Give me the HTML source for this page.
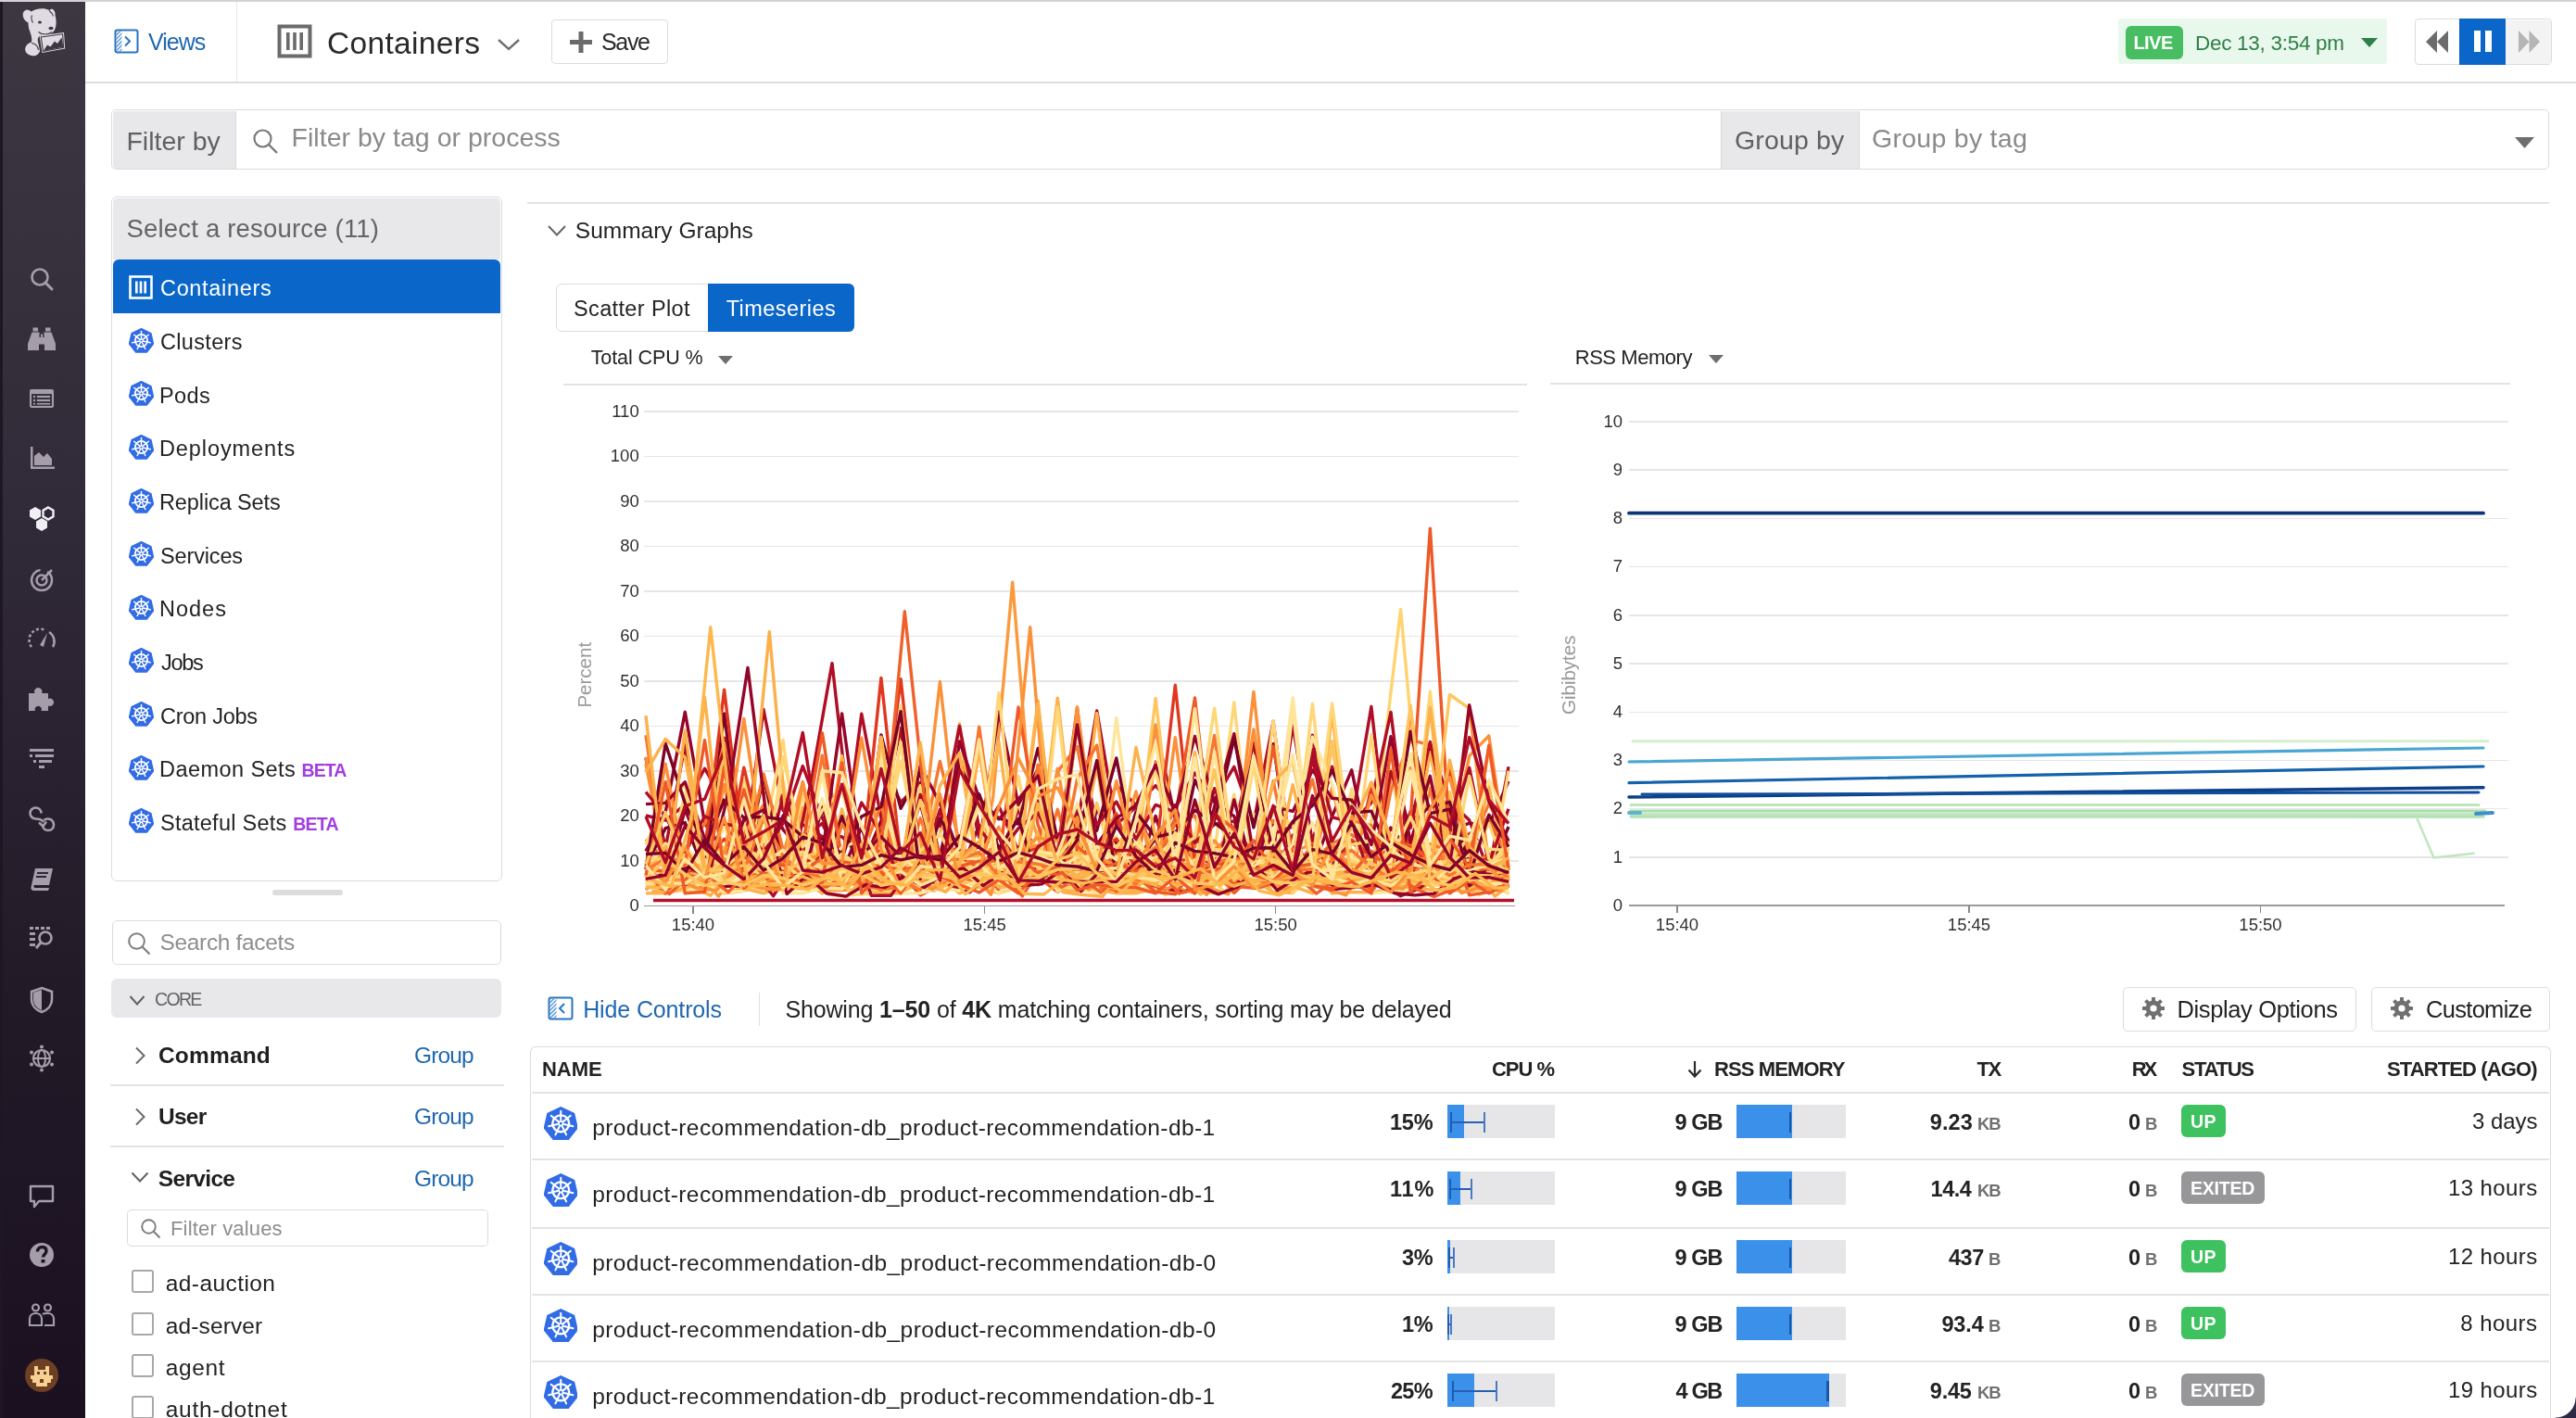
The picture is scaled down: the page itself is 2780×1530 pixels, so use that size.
<!DOCTYPE html>
<html><head><meta charset="utf-8"><title>Containers</title>
<style>
html,body{margin:0;padding:0;overflow:hidden;}
body{width:2780px;height:1530px;overflow:hidden;position:relative;background:#fff;font-family:"Liberation Sans", sans-serif;}
#root{position:absolute;left:0;top:0;width:2780px;height:1530px;overflow:hidden;will-change:transform;}
.t{position:absolute;white-space:nowrap;}
b{font-weight:bold;}
</style></head><body>
<div id="root"><div style="position:absolute;left:0.0px;top:0.0px;width:2780.0px;height:2.0px;background:#d3d3d5;"></div><div style="position:absolute;left:0.0px;top:2.0px;width:92.0px;height:1528.0px;background:linear-gradient(180deg,#3d3742 0%,#312a38 35%,#231a28 70%,#1a1020 100%);"></div><div style="position:absolute;left:0.0px;top:2.0px;width:3.0px;height:1528.0px;background:#1f1624;"></div><svg style="position:absolute;left:0;top:0" width="92" height="80" viewBox="0 0 92 80">
<g fill="#e0dbe3">
<path d="M33 13 C38 9 48 8 53 11 L56 9.5 C58.5 10.5 60 13.5 59.5 16.5 C61 21 61 27 59.5 31 C58 35 54 38 48 38.5 L43 38.5 C41 40 40 43 41.5 47 L43 55 C42 59 38 61 34 60 C29 59 26 55 27.5 51 C28.5 48 31 46.5 34 45.5 C35 42 33.5 37 31.5 32 C30 26 30 19 33 13 Z"/>
<ellipse cx="30.5" cy="17.5" rx="5.5" ry="7.2" transform="rotate(-25 30.5 17.5)"/>
<path d="M42.5 38.5 L69 35 L70.2 52.5 L45.5 57 Z"/>
</g>
<g fill="none" stroke="#3d3742" stroke-width="1.1">
<path d="M35.5 24.5 C34 22 33.5 19 34.5 16.5"/>
<path d="M53 11.5 C55 13 57 15 57.5 17.5"/>
<path d="M41.5 34.5 C45 37.5 52 38 56 34.5"/>
<path d="M34 46.5 C38 47 41 50 41.5 54"/>
<path d="M44.2 40 L67.6 36.8 L68.6 51.2 L46.6 55.3 Z"/>
</g>
<g fill="#3d3742">
<ellipse cx="43" cy="24" rx="2" ry="1.6"/>
<ellipse cx="55" cy="30.5" rx="2.6" ry="1.7"/>
<path d="M47 54.8 L51 48.5 L54.5 50.5 L59 44.5 L62 47 L66.5 40.5 L68.4 50.8 Z"/>
</g>
</svg><svg style="position:absolute;left:29.0px;top:284.5px" width="32" height="32" viewBox="0 0 32 32"><circle cx="14" cy="14" r="8.5" fill="none" stroke="#a59daa" stroke-width="2.6"/><path d="M20 20 L27 27" stroke="#a59daa" stroke-width="3" stroke-linecap="round"/></svg><svg style="position:absolute;left:29.0px;top:349.5px" width="32" height="32" viewBox="0 0 32 32"><path d="M6.5 3.5h5.5v4h-5.5zM20 3.5h5.5v4H20zM5.5 8.5h8v5.5h1.5v-3.5h2v3.5h1.5V8.5h8l4.5 12.5v7H19v-6.5h-6V28H1v-7z" fill="#a59daa"/></svg><svg style="position:absolute;left:29.0px;top:413.5px" width="32" height="32" viewBox="0 0 32 32"><rect x="3" y="6" width="26" height="20" rx="2" fill="#a59daa"/><rect x="5" y="11" width="22" height="13" fill="#3a3340"/><g fill="#a59daa"><rect x="7" y="13" width="2" height="2"/><rect x="11" y="13" width="14" height="2"/><rect x="7" y="17" width="2" height="2"/><rect x="11" y="17" width="14" height="2"/><rect x="7" y="21" width="2" height="1.5"/><rect x="11" y="21" width="14" height="1.5"/></g></svg><svg style="position:absolute;left:29.0px;top:478.4px" width="32" height="32" viewBox="0 0 32 32"><path d="M4 4v24h26v-2.5H6.5V4z" fill="#a59daa"/><path d="M8 24V14l5-4 5 5 4-4 5 6v7z" fill="#a59daa"/></svg><svg style="position:absolute;left:29.0px;top:544.3px" width="32" height="32" viewBox="0 0 32 32"><path d="M9 3l6 3.5v7L9 17l-6-3.5v-7z" fill="#f2eef5"/><path d="M23 3.5l5.5 3.2v6.6L23 16.5l-5.5-3.2V6.7z" fill="none" stroke="#f2eef5" stroke-width="2.4"/><path d="M16 15l6 3.5v7L16 29l-6-3.5v-7z" fill="#f2eef5"/></svg><svg style="position:absolute;left:29.0px;top:609.3px" width="32" height="32" viewBox="0 0 32 32"><circle cx="16" cy="17" r="11" fill="none" stroke="#a59daa" stroke-width="2.5" stroke-dasharray="50 8"/><circle cx="16" cy="17" r="5.5" fill="none" stroke="#a59daa" stroke-width="2.5"/><path d="M16 17 L27 6" stroke="#a59daa" stroke-width="2.5"/></svg><svg style="position:absolute;left:29.0px;top:674.2px" width="32" height="32" viewBox="0 0 32 32"><path d="M5 24 A12 12 0 0 1 20 6" fill="none" stroke="#a59daa" stroke-width="2.6" stroke-dasharray="3 2.5"/><path d="M24 8 A12 12 0 0 1 28 24" fill="none" stroke="#a59daa" stroke-width="2.6"/><path d="M14 22 L22 9 L18 24 Z" fill="#a59daa"/></svg><svg style="position:absolute;left:29.0px;top:738.0px" width="32" height="32" viewBox="0 0 32 32"><path d="M2 10 H8.5 A4.2 4.2 0 1 1 16 10 H23 V16 A4.2 4.2 0 1 1 23 23.5 V29 H15.5 A3.6 3.6 0 1 0 9 29 H2 Z" fill="#a59daa"/></svg><svg style="position:absolute;left:29.0px;top:803.0px" width="32" height="32" viewBox="0 0 32 32"><g fill="#a59daa"><rect x="3" y="5" width="26" height="3"/><rect x="3" y="11" width="3" height="3"/><rect x="9" y="11" width="20" height="3"/><rect x="7" y="17" width="3" height="3"/><rect x="13" y="17" width="14" height="3"/><rect x="13" y="23" width="6" height="3"/></g></svg><svg style="position:absolute;left:29.0px;top:868.0px" width="32" height="32" viewBox="0 0 32 32"><path d="M15.5 9.5 C15.5 5.8 12.8 3.5 9.5 3.5 C6.2 3.5 3.5 6.2 3.5 9.5 C3.5 12.8 6.2 15.5 9.5 15.5 C13.5 15.5 16.5 16.5 18 19 M18.5 16.8 C19.8 16 21.3 15.5 23 15.5 C26.5 15.5 29 18.5 29 22 C29 25.5 26.5 28 23 28 C19.5 28 17 25.5 17 22" fill="none" stroke="#a59daa" stroke-width="2.6"/><path d="M13 19.5 L17.5 23.5 L21 18.5" fill="none" stroke="#a59daa" stroke-width="2.6"/></svg><svg style="position:absolute;left:29.0px;top:933.0px" width="32" height="32" viewBox="0 0 32 32"><path d="M9 4h19l-4 18H5z" fill="#a59daa"/><path d="M5 22 Q3 28 8 28 H23 L24 25 H9 Q7 25 7.5 22z" fill="#a59daa"/><rect x="11" y="8" width="12" height="2" fill="#2e2636"/><rect x="10" y="12" width="11" height="2" fill="#2e2636"/></svg><svg style="position:absolute;left:29.0px;top:996.0px" width="32" height="32" viewBox="0 0 32 32"><g fill="#a59daa"><rect x="3" y="4" width="4" height="3"/><rect x="9" y="4" width="4" height="3"/><rect x="15" y="4" width="4" height="3"/><rect x="21" y="4" width="4" height="3"/><rect x="3" y="10" width="6" height="3"/><rect x="3" y="16" width="6" height="3"/><rect x="3" y="22" width="6" height="3"/></g><circle cx="20" cy="16" r="6.5" fill="none" stroke="#a59daa" stroke-width="2.6"/><path d="M15 21 L10 27" stroke="#a59daa" stroke-width="3"/></svg><svg style="position:absolute;left:29.0px;top:1062.8px" width="32" height="32" viewBox="0 0 32 32"><path d="M16 3 L27 7 V15 C27 22 22 27 16 29 C10 27 5 22 5 15 V7 Z" fill="none" stroke="#a59daa" stroke-width="2.5"/><path d="M16 5 V27 C11 25 7 21 7 15 V8 Z" fill="#a59daa"/></svg><svg style="position:absolute;left:29.0px;top:1126.0px" width="32" height="32" viewBox="0 0 32 32"><circle cx="16" cy="16" r="9" fill="none" stroke="#a59daa" stroke-width="2.2"/><ellipse cx="16" cy="16" rx="4" ry="9" fill="none" stroke="#a59daa" stroke-width="2"/><path d="M7 16h18" stroke="#a59daa" stroke-width="2"/><g fill="#a59daa"><circle cx="16" cy="3.5" r="2"/><circle cx="16" cy="28.5" r="2"/><circle cx="5" cy="9.5" r="2"/><circle cx="27" cy="9.5" r="2"/><circle cx="5" cy="22.5" r="2"/><circle cx="27" cy="22.5" r="2"/></g></svg><svg style="position:absolute;left:29.0px;top:1274.5px" width="32" height="32" viewBox="0 0 32 32"><path d="M4 5 H28 V21 H13 L8 27 V21 H4 Z" fill="none" stroke="#a59daa" stroke-width="2.4" stroke-linejoin="round"/></svg><svg style="position:absolute;left:29.0px;top:1338.0px" width="32" height="32" viewBox="0 0 32 32"><circle cx="16" cy="16" r="13" fill="#a59daa"/><path d="M11.5 12.5 C11.5 9 14 7.5 16.5 7.5 C19.5 7.5 21 9.5 21 12 C21 15 17.5 15.5 17.5 18.5" fill="none" stroke="#1e1424" stroke-width="3.4"/><rect x="15.5" y="21" width="4" height="3.5" fill="#1e1424"/></svg><svg style="position:absolute;left:29.0px;top:1403.0px" width="32" height="32" viewBox="0 0 32 32"><circle cx="9.5" cy="8" r="3.5" fill="none" stroke="#a59daa" stroke-width="2.2"/><circle cx="22.5" cy="8" r="3.5" fill="none" stroke="#a59daa" stroke-width="2.2"/><path d="M3 27 V20 C3 16 6 14 9.5 14 C13 14 16 16 16 20 V27 Z" fill="none" stroke="#a59daa" stroke-width="2.2"/><path d="M17 15 C18 14 20 14 22.5 14 C26 14 29 16 29 20 V27 H19" fill="none" stroke="#a59daa" stroke-width="2.2"/></svg><svg style="position:absolute;left:27px;top:1466px" width="36" height="36" viewBox="0 0 36 36"><circle cx="18" cy="18" r="18" fill="#6e3f22"/>
<g fill="#f6cf93"><rect x="10" y="8" width="4" height="4"/><rect x="22" y="8" width="4" height="4"/><rect x="10" y="12" width="16" height="6"/><rect x="6" y="18" width="24" height="4"/><rect x="8" y="22" width="8" height="4"/><rect x="20" y="22" width="8" height="4"/><rect x="12" y="26" width="12" height="4"/></g>
<g fill="#6e3f22"><rect x="13" y="14" width="3" height="3"/><rect x="20" y="14" width="3" height="3"/><rect x="16" y="22" width="4" height="3"/></g></svg><div style="position:absolute;left:92.0px;top:88.0px;width:2688.0px;height:1.5px;background:#dedde0;"></div><div style="position:absolute;left:254.5px;top:2.0px;width:1.2px;height:86.0px;background:#e6e6e8;"></div><svg style="position:absolute;left:123px;top:31px" width="27" height="27" viewBox="0 0 27 27">
<defs><pattern id="hatch" width="3" height="3" patternUnits="userSpaceOnUse" patternTransform="rotate(45)"><rect width="1.2" height="3" fill="#3a83cc"/></pattern></defs>
<rect x="1.5" y="1.5" width="24" height="24" rx="2" fill="none" stroke="#2a75c0" stroke-width="2"/>
<rect x="2.5" y="2.5" width="6" height="22" fill="url(#hatch)"/>
<path d="M12 8.5 L17 13.5 L12 18.5" fill="none" stroke="#2a75c0" stroke-width="2"/></svg><div id="t1" class="t" style="left:160.0px;top:32.8px;font-size:25.0px;line-height:25.0px;color:#2068b0;font-weight:normal;letter-spacing:-1.000px;">Views</div><svg style="position:absolute;left:299px;top:26px" width="38" height="37" viewBox="0 0 38 37">
<rect x="2.5" y="2.5" width="33" height="32" fill="none" stroke="#6b6b6b" stroke-width="4"/>
<rect x="10" y="9" width="3.6" height="19" fill="#6b6b6b"/><rect x="17.2" y="9" width="3.6" height="19" fill="#6b6b6b"/><rect x="24.4" y="9" width="3.6" height="19" fill="#6b6b6b"/></svg><div id="t2" class="t" style="left:353.0px;top:29.5px;font-size:33.5px;line-height:33.5px;color:#2a2a2c;font-weight:normal;letter-spacing:0.333px;">Containers</div><svg style="position:absolute;left:536px;top:41px" width="26" height="14" viewBox="0 0 26 14"><path d="M2 2 L13 12 L24 2" fill="none" stroke="#707070" stroke-width="2.4"/></svg><div style="position:absolute;left:595.0px;top:21.0px;width:126.0px;height:48.0px;box-sizing:border-box;border:1.5px solid #dcdcde;border-radius:4px;background:#fff;"></div><svg style="position:absolute;left:615px;top:34px" width="24" height="23" viewBox="0 0 24 23"><rect x="9.5" y="0" width="5" height="23" fill="#6a6a6a"/><rect x="0" y="9" width="24" height="5" fill="#6a6a6a"/></svg><div id="t3" class="t" style="left:649.0px;top:32.8px;font-size:25.0px;line-height:25.0px;color:#2a2a2c;font-weight:normal;letter-spacing:-1.333px;">Save</div><div style="position:absolute;left:2286.0px;top:20.0px;width:290.0px;height:49.0px;background:#e9f8ec;border-radius:3px;"></div><div style="position:absolute;left:2294.0px;top:28.0px;width:62.0px;height:36.0px;background:#48bd61;border-radius:6px;"></div><div id="t4" class="t" style="left:2302.4px;top:36.0px;font-size:20.0px;line-height:20.0px;color:#ffffff;font-weight:bold;letter-spacing:-0.533px;">LIVE</div><div id="t5" class="t" style="left:2369.0px;top:35.9px;font-size:22.5px;line-height:22.5px;color:#2f7f47;font-weight:normal;letter-spacing:-0.286px;">Dec 13, 3:54 pm</div><svg style="position:absolute;left:2548px;top:41px" width="18" height="10" viewBox="0 0 18 10"><path d="M0 0 H18 L9 10 Z" fill="#2f8049"/></svg><div style="position:absolute;left:2606.0px;top:20.0px;width:148.0px;height:50.0px;box-sizing:border-box;border:1.5px solid #dcdcde;border-radius:4px;background:#fff;"></div><div style="position:absolute;left:2704.0px;top:21.5px;width:48.5px;height:47.0px;background:#f3f3f4;"></div><div style="position:absolute;left:2654.0px;top:20.0px;width:50.0px;height:50.0px;background:#0b66c9;"></div><svg style="position:absolute;left:2618px;top:33px" width="24" height="24" viewBox="0 0 24 24"><path d="M12 0 V24 L0 12 Z M24 0 V24 L12 12 Z" fill="#6c6c6c"/></svg><div style="position:absolute;left:2669.8px;top:33.3px;width:7.6px;height:22.8px;background:#fff;"></div><div style="position:absolute;left:2681.9px;top:33.3px;width:7.6px;height:22.8px;background:#fff;"></div><svg style="position:absolute;left:2718px;top:33px" width="23" height="24" viewBox="0 0 23 24"><path d="M0 0 L11.5 12 L0 24 Z M11.5 0 L23 12 L11.5 24 Z" fill="#b5b5b8"/></svg><div style="position:absolute;left:120.0px;top:118.0px;width:2630.6px;height:65.0px;box-sizing:border-box;border:1.5px solid #dcdcdf;border-radius:5px;background:#fff;"></div><div style="position:absolute;left:121.5px;top:119.5px;width:132.5px;height:62.0px;background:#e8e8eb;border-radius:4px 0 0 4px;border-right:1.2px solid #dadadd;"></div><div id="t6" class="t" style="left:136.4px;top:137.5px;font-size:28.5px;line-height:28.5px;color:#606062;font-weight:normal;letter-spacing:0.000px;">Filter by</div><svg style="position:absolute;left:272px;top:138px" width="29" height="29" viewBox="0 0 29 29"><circle cx="11.5" cy="11.5" r="9" fill="none" stroke="#7a7a7a" stroke-width="2.2"/><path d="M18 18 L27 27" stroke="#7a7a7a" stroke-width="2.4"/></svg><div id="t7" class="t" style="left:314.6px;top:133.8px;font-size:28.5px;line-height:28.5px;color:#8a8a8c;font-weight:normal;letter-spacing:0.017px;">Filter by tag or process</div><div style="position:absolute;left:1856.5px;top:119.5px;width:148.5px;height:62.0px;background:#e8e8eb;border-left:1.2px solid #dadadd;border-right:1.2px solid #dadadd;"></div><div id="t8" class="t" style="left:1872.0px;top:137.3px;font-size:28.5px;line-height:28.5px;color:#606062;font-weight:normal;letter-spacing:0.143px;">Group by</div><div id="t9" class="t" style="left:2020.0px;top:135.4px;font-size:28.5px;line-height:28.5px;color:#8a8a8c;font-weight:normal;letter-spacing:0.273px;">Group by tag</div><svg style="position:absolute;left:2714px;top:148px" width="21" height="12" viewBox="0 0 21 12"><path d="M0 0 H21 L10.5 12 Z" fill="#6e6e6e"/></svg><div style="position:absolute;left:120.0px;top:212.4px;width:421.5px;height:738.2px;box-sizing:border-box;border:1.5px solid #dcdcdf;border-radius:6px;background:#fff;"></div><div style="position:absolute;left:121.5px;top:213.9px;width:418.5px;height:66.1px;background:#e8e8eb;border-radius:5px 5px 0 0;"></div><div id="t10" class="t" style="left:136.5px;top:232.6px;font-size:27.5px;line-height:27.5px;color:#646466;font-weight:normal;letter-spacing:0.190px;">Select a resource (11)</div><div style="position:absolute;left:122.4px;top:280.0px;width:417.6px;height:57.7px;background:#0b66c9;border-radius:6px 6px 0 0;"></div><svg style="position:absolute;left:139px;top:297px" width="26" height="26" viewBox="0 0 26 26">
<rect x="1.5" y="1.5" width="23" height="23" fill="none" stroke="#fff" stroke-width="2.6"/>
<rect x="7" y="6.5" width="2.6" height="13" fill="#fff"/><rect x="11.7" y="6.5" width="2.6" height="13" fill="#fff"/><rect x="16.4" y="6.5" width="2.6" height="13" fill="#fff"/></svg><div id="t11" class="t" style="left:173.0px;top:300.0px;font-size:23.5px;line-height:23.5px;color:#ffffff;font-weight:normal;letter-spacing:0.667px;">Containers</div><svg style="position:absolute;left:138.5px;top:353.5px" width="27.0" height="27.0" viewBox="0 0 27.0 27.0"><polygon points="13.50,0.95 23.74,5.88 26.27,16.95 19.18,25.84 7.82,25.84 0.73,16.95 3.26,5.88" fill="#326ce5" stroke="#326ce5" stroke-width="1.89" stroke-linejoin="round"/><g stroke="#fff" fill="none"><circle cx="13.50" cy="13.50" r="6.62" stroke-width="1.76"/><path d="M13.50 11.61 L13.50 3.51 M14.98 12.32 L21.31 7.27 M15.34 13.92 L23.24 15.72 M14.32 15.20 L17.83 22.50 M12.68 15.20 L9.17 22.50 M11.66 13.92 L3.76 15.72 M12.02 12.32 L5.69 7.27 " stroke-width="1.49" stroke-linecap="round"/></g><circle cx="13.50" cy="13.50" r="1.62" fill="#326ce5" stroke="#fff" stroke-width="1.08"/></svg><div id="t12" class="t" style="left:173.0px;top:358.0px;font-size:23.5px;line-height:23.5px;color:#232325;font-weight:normal;letter-spacing:0.329px;">Clusters</div><svg style="position:absolute;left:138.5px;top:411.1px" width="27.0" height="27.0" viewBox="0 0 27.0 27.0"><polygon points="13.50,0.95 23.74,5.88 26.27,16.95 19.18,25.84 7.82,25.84 0.73,16.95 3.26,5.88" fill="#326ce5" stroke="#326ce5" stroke-width="1.89" stroke-linejoin="round"/><g stroke="#fff" fill="none"><circle cx="13.50" cy="13.50" r="6.62" stroke-width="1.76"/><path d="M13.50 11.61 L13.50 3.51 M14.98 12.32 L21.31 7.27 M15.34 13.92 L23.24 15.72 M14.32 15.20 L17.83 22.50 M12.68 15.20 L9.17 22.50 M11.66 13.92 L3.76 15.72 M12.02 12.32 L5.69 7.27 " stroke-width="1.49" stroke-linecap="round"/></g><circle cx="13.50" cy="13.50" r="1.62" fill="#326ce5" stroke="#fff" stroke-width="1.08"/></svg><div id="t13" class="t" style="left:172.0px;top:415.7px;font-size:23.5px;line-height:23.5px;color:#232325;font-weight:normal;letter-spacing:0.433px;">Pods</div><svg style="position:absolute;left:138.5px;top:468.8px" width="27.0" height="27.0" viewBox="0 0 27.0 27.0"><polygon points="13.50,0.95 23.74,5.88 26.27,16.95 19.18,25.84 7.82,25.84 0.73,16.95 3.26,5.88" fill="#326ce5" stroke="#326ce5" stroke-width="1.89" stroke-linejoin="round"/><g stroke="#fff" fill="none"><circle cx="13.50" cy="13.50" r="6.62" stroke-width="1.76"/><path d="M13.50 11.61 L13.50 3.51 M14.98 12.32 L21.31 7.27 M15.34 13.92 L23.24 15.72 M14.32 15.20 L17.83 22.50 M12.68 15.20 L9.17 22.50 M11.66 13.92 L3.76 15.72 M12.02 12.32 L5.69 7.27 " stroke-width="1.49" stroke-linecap="round"/></g><circle cx="13.50" cy="13.50" r="1.62" fill="#326ce5" stroke="#fff" stroke-width="1.08"/></svg><div id="t14" class="t" style="left:172.0px;top:473.3px;font-size:23.5px;line-height:23.5px;color:#232325;font-weight:normal;letter-spacing:0.900px;">Deployments</div><svg style="position:absolute;left:138.5px;top:526.5px" width="27.0" height="27.0" viewBox="0 0 27.0 27.0"><polygon points="13.50,0.95 23.74,5.88 26.27,16.95 19.18,25.84 7.82,25.84 0.73,16.95 3.26,5.88" fill="#326ce5" stroke="#326ce5" stroke-width="1.89" stroke-linejoin="round"/><g stroke="#fff" fill="none"><circle cx="13.50" cy="13.50" r="6.62" stroke-width="1.76"/><path d="M13.50 11.61 L13.50 3.51 M14.98 12.32 L21.31 7.27 M15.34 13.92 L23.24 15.72 M14.32 15.20 L17.83 22.50 M12.68 15.20 L9.17 22.50 M11.66 13.92 L3.76 15.72 M12.02 12.32 L5.69 7.27 " stroke-width="1.49" stroke-linecap="round"/></g><circle cx="13.50" cy="13.50" r="1.62" fill="#326ce5" stroke="#fff" stroke-width="1.08"/></svg><div id="t15" class="t" style="left:172.0px;top:531.0px;font-size:23.5px;line-height:23.5px;color:#232325;font-weight:normal;letter-spacing:-0.109px;">Replica Sets</div><svg style="position:absolute;left:138.5px;top:584.1px" width="27.0" height="27.0" viewBox="0 0 27.0 27.0"><polygon points="13.50,0.95 23.74,5.88 26.27,16.95 19.18,25.84 7.82,25.84 0.73,16.95 3.26,5.88" fill="#326ce5" stroke="#326ce5" stroke-width="1.89" stroke-linejoin="round"/><g stroke="#fff" fill="none"><circle cx="13.50" cy="13.50" r="6.62" stroke-width="1.76"/><path d="M13.50 11.61 L13.50 3.51 M14.98 12.32 L21.31 7.27 M15.34 13.92 L23.24 15.72 M14.32 15.20 L17.83 22.50 M12.68 15.20 L9.17 22.50 M11.66 13.92 L3.76 15.72 M12.02 12.32 L5.69 7.27 " stroke-width="1.49" stroke-linecap="round"/></g><circle cx="13.50" cy="13.50" r="1.62" fill="#326ce5" stroke="#fff" stroke-width="1.08"/></svg><div id="t16" class="t" style="left:173.0px;top:588.6px;font-size:23.5px;line-height:23.5px;color:#232325;font-weight:normal;letter-spacing:-0.143px;">Services</div><svg style="position:absolute;left:138.5px;top:641.8px" width="27.0" height="27.0" viewBox="0 0 27.0 27.0"><polygon points="13.50,0.95 23.74,5.88 26.27,16.95 19.18,25.84 7.82,25.84 0.73,16.95 3.26,5.88" fill="#326ce5" stroke="#326ce5" stroke-width="1.89" stroke-linejoin="round"/><g stroke="#fff" fill="none"><circle cx="13.50" cy="13.50" r="6.62" stroke-width="1.76"/><path d="M13.50 11.61 L13.50 3.51 M14.98 12.32 L21.31 7.27 M15.34 13.92 L23.24 15.72 M14.32 15.20 L17.83 22.50 M12.68 15.20 L9.17 22.50 M11.66 13.92 L3.76 15.72 M12.02 12.32 L5.69 7.27 " stroke-width="1.49" stroke-linecap="round"/></g><circle cx="13.50" cy="13.50" r="1.62" fill="#326ce5" stroke="#fff" stroke-width="1.08"/></svg><div id="t17" class="t" style="left:172.0px;top:646.3px;font-size:23.5px;line-height:23.5px;color:#232325;font-weight:normal;letter-spacing:1.000px;">Nodes</div><svg style="position:absolute;left:138.5px;top:699.4px" width="27.0" height="27.0" viewBox="0 0 27.0 27.0"><polygon points="13.50,0.95 23.74,5.88 26.27,16.95 19.18,25.84 7.82,25.84 0.73,16.95 3.26,5.88" fill="#326ce5" stroke="#326ce5" stroke-width="1.89" stroke-linejoin="round"/><g stroke="#fff" fill="none"><circle cx="13.50" cy="13.50" r="6.62" stroke-width="1.76"/><path d="M13.50 11.61 L13.50 3.51 M14.98 12.32 L21.31 7.27 M15.34 13.92 L23.24 15.72 M14.32 15.20 L17.83 22.50 M12.68 15.20 L9.17 22.50 M11.66 13.92 L3.76 15.72 M12.02 12.32 L5.69 7.27 " stroke-width="1.49" stroke-linecap="round"/></g><circle cx="13.50" cy="13.50" r="1.62" fill="#326ce5" stroke="#fff" stroke-width="1.08"/></svg><div id="t18" class="t" style="left:174.0px;top:703.9px;font-size:23.5px;line-height:23.5px;color:#232325;font-weight:normal;letter-spacing:-1.333px;">Jobs</div><svg style="position:absolute;left:138.5px;top:757.0px" width="27.0" height="27.0" viewBox="0 0 27.0 27.0"><polygon points="13.50,0.95 23.74,5.88 26.27,16.95 19.18,25.84 7.82,25.84 0.73,16.95 3.26,5.88" fill="#326ce5" stroke="#326ce5" stroke-width="1.89" stroke-linejoin="round"/><g stroke="#fff" fill="none"><circle cx="13.50" cy="13.50" r="6.62" stroke-width="1.76"/><path d="M13.50 11.61 L13.50 3.51 M14.98 12.32 L21.31 7.27 M15.34 13.92 L23.24 15.72 M14.32 15.20 L17.83 22.50 M12.68 15.20 L9.17 22.50 M11.66 13.92 L3.76 15.72 M12.02 12.32 L5.69 7.27 " stroke-width="1.49" stroke-linecap="round"/></g><circle cx="13.50" cy="13.50" r="1.62" fill="#326ce5" stroke="#fff" stroke-width="1.08"/></svg><div id="t19" class="t" style="left:173.0px;top:761.6px;font-size:23.5px;line-height:23.5px;color:#232325;font-weight:normal;letter-spacing:-0.250px;">Cron Jobs</div><svg style="position:absolute;left:138.5px;top:814.7px" width="27.0" height="27.0" viewBox="0 0 27.0 27.0"><polygon points="13.50,0.95 23.74,5.88 26.27,16.95 19.18,25.84 7.82,25.84 0.73,16.95 3.26,5.88" fill="#326ce5" stroke="#326ce5" stroke-width="1.89" stroke-linejoin="round"/><g stroke="#fff" fill="none"><circle cx="13.50" cy="13.50" r="6.62" stroke-width="1.76"/><path d="M13.50 11.61 L13.50 3.51 M14.98 12.32 L21.31 7.27 M15.34 13.92 L23.24 15.72 M14.32 15.20 L17.83 22.50 M12.68 15.20 L9.17 22.50 M11.66 13.92 L3.76 15.72 M12.02 12.32 L5.69 7.27 " stroke-width="1.49" stroke-linecap="round"/></g><circle cx="13.50" cy="13.50" r="1.62" fill="#326ce5" stroke="#fff" stroke-width="1.08"/></svg><div id="t20" class="t" style="left:172.0px;top:819.2px;font-size:23.5px;line-height:23.5px;color:#232325;font-weight:normal;letter-spacing:0.440px;">Daemon Sets</div><svg style="position:absolute;left:138.5px;top:872.4px" width="27.0" height="27.0" viewBox="0 0 27.0 27.0"><polygon points="13.50,0.95 23.74,5.88 26.27,16.95 19.18,25.84 7.82,25.84 0.73,16.95 3.26,5.88" fill="#326ce5" stroke="#326ce5" stroke-width="1.89" stroke-linejoin="round"/><g stroke="#fff" fill="none"><circle cx="13.50" cy="13.50" r="6.62" stroke-width="1.76"/><path d="M13.50 11.61 L13.50 3.51 M14.98 12.32 L21.31 7.27 M15.34 13.92 L23.24 15.72 M14.32 15.20 L17.83 22.50 M12.68 15.20 L9.17 22.50 M11.66 13.92 L3.76 15.72 M12.02 12.32 L5.69 7.27 " stroke-width="1.49" stroke-linecap="round"/></g><circle cx="13.50" cy="13.50" r="1.62" fill="#326ce5" stroke="#fff" stroke-width="1.08"/></svg><div id="t21" class="t" style="left:173.0px;top:876.9px;font-size:23.5px;line-height:23.5px;color:#232325;font-weight:normal;letter-spacing:0.250px;">Stateful Sets</div><div id="t22" class="t" style="left:325.6px;top:822.4px;font-size:19.5px;line-height:19.5px;color:#a23ee0;font-weight:bold;letter-spacing:-0.933px;">BETA</div><div id="t23" class="t" style="left:316.3px;top:880.2px;font-size:19.5px;line-height:19.5px;color:#a23ee0;font-weight:bold;letter-spacing:-0.767px;">BETA</div><div style="position:absolute;left:294.0px;top:960.0px;width:76.0px;height:6.0px;background:#dcdcde;border-radius:3px;"></div><div style="position:absolute;left:120.6px;top:992.5px;width:420.4px;height:48.5px;box-sizing:border-box;border:1.5px solid #dcdcdf;border-radius:5px;background:#fff;"></div><svg style="position:absolute;left:137px;top:1005px" width="26" height="26" viewBox="0 0 26 26"><circle cx="10.5" cy="10.5" r="8.3" fill="none" stroke="#7c7c7c" stroke-width="2"/><path d="M16.5 16.5 L24.5 24.5" stroke="#7c7c7c" stroke-width="2.2"/></svg><div id="t24" class="t" style="left:172.5px;top:1004.9px;font-size:24.5px;line-height:24.5px;color:#8e8e90;font-weight:normal;letter-spacing:-0.333px;">Search facets</div><div style="position:absolute;left:120.0px;top:1056.0px;width:421.0px;height:41.6px;background:#e8e8eb;border-radius:6px;"></div><svg style="position:absolute;left:139px;top:1073px" width="18" height="13" viewBox="0 0 18 13"><path d="M1.5 2 L9 10.5 L16.5 2" fill="none" stroke="#616161" stroke-width="2"/></svg><div id="t25" class="t" style="left:167.0px;top:1069.4px;font-size:19.5px;line-height:19.5px;color:#636365;font-weight:normal;letter-spacing:-1.667px;">CORE</div><svg style="position:absolute;left:144.5px;top:1128.5px" width="13" height="20" viewBox="0 0 13 20"><path d="M2 1.5 L10.5 10 L2 18.5" fill="none" stroke="#6a6a6a" stroke-width="2"/></svg><div id="t26" class="t" style="left:171.0px;top:1126.9px;font-size:24.5px;line-height:24.5px;color:#1f1f21;font-weight:bold;letter-spacing:0.167px;">Command</div><div id="t27" class="t" style="left:447.0px;top:1127.4px;font-size:24.5px;line-height:24.5px;color:#2068b0;font-weight:normal;letter-spacing:-0.875px;">Group</div><div style="position:absolute;left:118.5px;top:1170.3px;width:425.0px;height:1.5px;background:#e3e3e5;"></div><svg style="position:absolute;left:144.5px;top:1194.5px" width="13" height="20" viewBox="0 0 13 20"><path d="M2 1.5 L10.5 10 L2 18.5" fill="none" stroke="#6a6a6a" stroke-width="2"/></svg><div id="t28" class="t" style="left:171.0px;top:1193.2px;font-size:24.5px;line-height:24.5px;color:#1f1f21;font-weight:bold;letter-spacing:-0.733px;">User</div><div id="t29" class="t" style="left:447.0px;top:1193.4px;font-size:24.5px;line-height:24.5px;color:#2068b0;font-weight:normal;letter-spacing:-0.875px;">Group</div><div style="position:absolute;left:118.5px;top:1236.3px;width:425.0px;height:1.5px;background:#e3e3e5;"></div><svg style="position:absolute;left:141px;top:1264px" width="20" height="13" viewBox="0 0 20 13"><path d="M1.5 1.5 L10 10.5 L18.5 1.5" fill="none" stroke="#616161" stroke-width="2"/></svg><div id="t30" class="t" style="left:170.8px;top:1259.6px;font-size:24.5px;line-height:24.5px;color:#1f1f21;font-weight:bold;letter-spacing:-0.667px;">Service</div><div id="t31" class="t" style="left:447.0px;top:1259.6px;font-size:24.5px;line-height:24.5px;color:#2068b0;font-weight:normal;letter-spacing:-0.875px;">Group</div><div style="position:absolute;left:137.0px;top:1304.5px;width:390.0px;height:40.8px;box-sizing:border-box;border:1.5px solid #dcdcdf;border-radius:5px;background:#fff;"></div><svg style="position:absolute;left:151px;top:1314px" width="23" height="23" viewBox="0 0 23 23"><circle cx="9.5" cy="9.5" r="7.3" fill="none" stroke="#7c7c7c" stroke-width="1.9"/><path d="M14.8 14.8 L21.5 21.5" stroke="#7c7c7c" stroke-width="2"/></svg><div id="t32" class="t" style="left:184.0px;top:1315.3px;font-size:22.0px;line-height:22.0px;color:#8e8e90;font-weight:normal;letter-spacing:0.167px;">Filter values</div><div style="position:absolute;left:141.7px;top:1370.0px;width:24.5px;height:25.0px;box-sizing:border-box;border:2px solid #a9a9ab;border-radius:3px;background:#fff;"></div><div id="t33" class="t" style="left:178.8px;top:1373.2px;font-size:24.5px;line-height:24.5px;color:#232325;font-weight:normal;letter-spacing:0.411px;">ad-auction</div><div style="position:absolute;left:141.7px;top:1416.0px;width:24.5px;height:25.0px;box-sizing:border-box;border:2px solid #a9a9ab;border-radius:3px;background:#fff;"></div><div id="t34" class="t" style="left:178.8px;top:1418.7px;font-size:24.5px;line-height:24.5px;color:#232325;font-weight:normal;letter-spacing:0.125px;">ad-server</div><div style="position:absolute;left:141.7px;top:1460.6px;width:24.5px;height:25.0px;box-sizing:border-box;border:2px solid #a9a9ab;border-radius:3px;background:#fff;"></div><div id="t35" class="t" style="left:178.8px;top:1463.7px;font-size:24.5px;line-height:24.5px;color:#232325;font-weight:normal;letter-spacing:0.600px;">agent</div><div style="position:absolute;left:141.7px;top:1506.0px;width:24.5px;height:25.0px;box-sizing:border-box;border:2px solid #a9a9ab;border-radius:3px;background:#fff;"></div><div id="t36" class="t" style="left:178.8px;top:1508.7px;font-size:24.5px;line-height:24.5px;color:#232325;font-weight:normal;letter-spacing:0.700px;">auth-dotnet</div><div style="position:absolute;left:568.5px;top:218.0px;width:2182.0px;height:1.5px;background:#e3e3e5;"></div><svg style="position:absolute;left:590px;top:242px" width="22" height="14" viewBox="0 0 22 14"><path d="M2 2 L11 11.5 L20 2" fill="none" stroke="#666" stroke-width="2"/></svg><div id="t37" class="t" style="left:620.8px;top:237.2px;font-size:24.5px;line-height:24.5px;color:#242426;font-weight:normal;letter-spacing:0.000px;">Summary Graphs</div><div style="position:absolute;left:600.0px;top:306.0px;width:322.0px;height:51.5px;box-sizing:border-box;border:1.5px solid #dcdcdf;border-radius:6px;background:#fff;"></div><div style="position:absolute;left:764.0px;top:306.0px;width:158.0px;height:51.5px;background:#0b66c9;border-radius:0 6px 6px 0;"></div><div id="t38" class="t" style="left:619.0px;top:321.8px;font-size:23.5px;line-height:23.5px;color:#232325;font-weight:normal;letter-spacing:0.364px;">Scatter Plot</div><div id="t39" class="t" style="left:783.7px;top:321.8px;font-size:23.5px;line-height:23.5px;color:#ffffff;font-weight:normal;letter-spacing:0.444px;">Timeseries</div><div id="t40" class="t" style="left:637.7px;top:375.5px;font-size:21.5px;line-height:21.5px;color:#232325;font-weight:normal;letter-spacing:-0.100px;">Total CPU %</div><svg style="position:absolute;left:775px;top:384px" width="16" height="9" viewBox="0 0 16 9"><path d="M0 0 H16 L8 9 Z" fill="#6e6e6e"/></svg><div style="position:absolute;left:607.8px;top:414.2px;width:1040.0px;height:1.5px;background:#e3e3e5;"></div><div id="t41" class="t" style="left:1699.7px;top:375.4px;font-size:22.0px;line-height:22.0px;color:#232325;font-weight:normal;letter-spacing:-0.444px;">RSS Memory</div><svg style="position:absolute;left:1844px;top:383px" width="16" height="9" viewBox="0 0 16 9"><path d="M0 0 H16 L8 9 Z" fill="#6e6e6e"/></svg><div style="position:absolute;left:1673.4px;top:413.2px;width:1036.0px;height:1.5px;background:#e3e3e5;"></div><div id="t42" class="t" style="right:2090.3px;top:968.2px;font-size:18.5px;line-height:18.5px;color:#303032;font-weight:normal;letter-spacing:0.000px;">0</div><div style="position:absolute;left:695.2px;top:928.2px;width:943.8px;height:1.5px;background:#e6e6e8;"></div><div id="t43" class="t" style="right:2090.3px;top:919.7px;font-size:18.5px;line-height:18.5px;color:#303032;font-weight:normal;letter-spacing:0.000px;">10</div><div style="position:absolute;left:695.2px;top:879.8px;width:943.8px;height:1.5px;background:#e6e6e8;"></div><div id="t44" class="t" style="right:2090.3px;top:871.2px;font-size:18.5px;line-height:18.5px;color:#303032;font-weight:normal;letter-spacing:0.000px;">20</div><div style="position:absolute;left:695.2px;top:831.2px;width:943.8px;height:1.5px;background:#e6e6e8;"></div><div id="t45" class="t" style="right:2090.3px;top:822.7px;font-size:18.5px;line-height:18.5px;color:#303032;font-weight:normal;letter-spacing:0.000px;">30</div><div style="position:absolute;left:695.2px;top:782.8px;width:943.8px;height:1.5px;background:#e6e6e8;"></div><div id="t46" class="t" style="right:2090.3px;top:774.2px;font-size:18.5px;line-height:18.5px;color:#303032;font-weight:normal;letter-spacing:0.000px;">40</div><div style="position:absolute;left:695.2px;top:734.2px;width:943.8px;height:1.5px;background:#e6e6e8;"></div><div id="t47" class="t" style="right:2090.3px;top:725.7px;font-size:18.5px;line-height:18.5px;color:#303032;font-weight:normal;letter-spacing:0.000px;">50</div><div style="position:absolute;left:695.2px;top:685.8px;width:943.8px;height:1.5px;background:#e6e6e8;"></div><div id="t48" class="t" style="right:2090.3px;top:677.2px;font-size:18.5px;line-height:18.5px;color:#303032;font-weight:normal;letter-spacing:0.000px;">60</div><div style="position:absolute;left:695.2px;top:637.2px;width:943.8px;height:1.5px;background:#e6e6e8;"></div><div id="t49" class="t" style="right:2090.3px;top:628.7px;font-size:18.5px;line-height:18.5px;color:#303032;font-weight:normal;letter-spacing:0.000px;">70</div><div style="position:absolute;left:695.2px;top:588.8px;width:943.8px;height:1.5px;background:#e6e6e8;"></div><div id="t50" class="t" style="right:2090.3px;top:580.2px;font-size:18.5px;line-height:18.5px;color:#303032;font-weight:normal;letter-spacing:0.000px;">80</div><div style="position:absolute;left:695.2px;top:540.2px;width:943.8px;height:1.5px;background:#e6e6e8;"></div><div id="t51" class="t" style="right:2090.3px;top:531.7px;font-size:18.5px;line-height:18.5px;color:#303032;font-weight:normal;letter-spacing:0.000px;">90</div><div style="position:absolute;left:695.2px;top:491.8px;width:943.8px;height:1.5px;background:#e6e6e8;"></div><div id="t52" class="t" style="right:2090.3px;top:483.2px;font-size:18.5px;line-height:18.5px;color:#303032;font-weight:normal;letter-spacing:0.000px;">100</div><div style="position:absolute;left:695.2px;top:443.2px;width:943.8px;height:1.5px;background:#e6e6e8;"></div><div id="t53" class="t" style="right:2090.3px;top:434.7px;font-size:18.5px;line-height:18.5px;color:#303032;font-weight:normal;letter-spacing:0.000px;">110</div><div style="position:absolute;left:695.2px;top:976.8px;width:939.8px;height:1.5px;background:#9a9a9c;"></div><div style="position:absolute;left:747.2px;top:977.5px;width:1.5px;height:8.0px;background:#8a8a8c;"></div><div class="t" style="left:708.0px;top:988.8px;width:80px;text-align:center;font-size:18.5px;line-height:18.5px;color:#303032;">15:40</div><div style="position:absolute;left:1061.8px;top:977.5px;width:1.5px;height:8.0px;background:#8a8a8c;"></div><div class="t" style="left:1022.6px;top:988.8px;width:80px;text-align:center;font-size:18.5px;line-height:18.5px;color:#303032;">15:45</div><div style="position:absolute;left:1375.8px;top:977.5px;width:1.5px;height:8.0px;background:#8a8a8c;"></div><div class="t" style="left:1336.6px;top:988.8px;width:80px;text-align:center;font-size:18.5px;line-height:18.5px;color:#303032;">15:50</div><div class="t" style="left:570.5px;top:717.8px;width:120px;text-align:center;font-size:20.5px;line-height:20.5px;color:#9a9a9c;transform:rotate(-90deg);">Percent</div><div id="t54" class="t" style="right:1029.0px;top:967.7px;font-size:18.5px;line-height:18.5px;color:#303032;font-weight:normal;letter-spacing:0.000px;">0</div><div style="position:absolute;left:1758.0px;top:924.0px;width:948.6px;height:1.5px;background:#e6e6e8;"></div><div id="t55" class="t" style="right:1029.0px;top:915.5px;font-size:18.5px;line-height:18.5px;color:#303032;font-weight:normal;letter-spacing:0.000px;">1</div><div style="position:absolute;left:1758.0px;top:871.9px;width:948.6px;height:1.5px;background:#e6e6e8;"></div><div id="t56" class="t" style="right:1029.0px;top:863.3px;font-size:18.5px;line-height:18.5px;color:#303032;font-weight:normal;letter-spacing:0.000px;">2</div><div style="position:absolute;left:1758.0px;top:819.6px;width:948.6px;height:1.5px;background:#e6e6e8;"></div><div id="t57" class="t" style="right:1029.0px;top:811.1px;font-size:18.5px;line-height:18.5px;color:#303032;font-weight:normal;letter-spacing:0.000px;">3</div><div style="position:absolute;left:1758.0px;top:767.5px;width:948.6px;height:1.5px;background:#e6e6e8;"></div><div id="t58" class="t" style="right:1029.0px;top:758.9px;font-size:18.5px;line-height:18.5px;color:#303032;font-weight:normal;letter-spacing:0.000px;">4</div><div style="position:absolute;left:1758.0px;top:715.2px;width:948.6px;height:1.5px;background:#e6e6e8;"></div><div id="t59" class="t" style="right:1029.0px;top:706.7px;font-size:18.5px;line-height:18.5px;color:#303032;font-weight:normal;letter-spacing:0.000px;">5</div><div style="position:absolute;left:1758.0px;top:663.0px;width:948.6px;height:1.5px;background:#e6e6e8;"></div><div id="t60" class="t" style="right:1029.0px;top:654.5px;font-size:18.5px;line-height:18.5px;color:#303032;font-weight:normal;letter-spacing:0.000px;">6</div><div style="position:absolute;left:1758.0px;top:610.8px;width:948.6px;height:1.5px;background:#e6e6e8;"></div><div id="t61" class="t" style="right:1029.0px;top:602.3px;font-size:18.5px;line-height:18.5px;color:#303032;font-weight:normal;letter-spacing:0.000px;">7</div><div style="position:absolute;left:1758.0px;top:558.6px;width:948.6px;height:1.5px;background:#e6e6e8;"></div><div id="t62" class="t" style="right:1029.0px;top:550.1px;font-size:18.5px;line-height:18.5px;color:#303032;font-weight:normal;letter-spacing:0.000px;">8</div><div style="position:absolute;left:1758.0px;top:506.4px;width:948.6px;height:1.5px;background:#e6e6e8;"></div><div id="t63" class="t" style="right:1029.0px;top:497.9px;font-size:18.5px;line-height:18.5px;color:#303032;font-weight:normal;letter-spacing:0.000px;">9</div><div style="position:absolute;left:1758.0px;top:454.2px;width:948.6px;height:1.5px;background:#e6e6e8;"></div><div id="t64" class="t" style="right:1029.0px;top:445.7px;font-size:18.5px;line-height:18.5px;color:#303032;font-weight:normal;letter-spacing:0.000px;">10</div><div style="position:absolute;left:1758.0px;top:976.2px;width:944.6px;height:1.5px;background:#9a9a9c;"></div><div style="position:absolute;left:1809.2px;top:977.0px;width:1.5px;height:8.0px;background:#8a8a8c;"></div><div class="t" style="left:1770.0px;top:988.8px;width:80px;text-align:center;font-size:18.5px;line-height:18.5px;color:#303032;">15:40</div><div style="position:absolute;left:2124.2px;top:977.0px;width:1.5px;height:8.0px;background:#8a8a8c;"></div><div class="t" style="left:2085.0px;top:988.8px;width:80px;text-align:center;font-size:18.5px;line-height:18.5px;color:#303032;">15:45</div><div style="position:absolute;left:2438.8px;top:977.0px;width:1.5px;height:8.0px;background:#8a8a8c;"></div><div class="t" style="left:2399.5px;top:988.8px;width:80px;text-align:center;font-size:18.5px;line-height:18.5px;color:#303032;">15:50</div><div class="t" style="left:1632.6px;top:717.8px;width:120px;text-align:center;font-size:20.5px;line-height:20.5px;color:#9a9a9c;transform:rotate(-90deg);">Gibibytes</div><svg style="position:absolute;left:0;top:0" width="2780" height="1530" viewBox="0 0 2780 1530"><g fill="none" stroke-width="3.4" stroke-linejoin="round"><polyline stroke="#fdb24c" points="697.0,963.9 718.2,963.9 739.3,952.9 760.5,939.1 781.6,963.9 802.8,961.2 824.0,954.8 845.1,961.2 866.3,949.2 887.4,963.9 908.6,946.9 929.8,957.9 950.9,885.9 972.1,958.7 993.2,941.5 1014.4,955.4 1035.5,916.6 1056.7,948.1 1077.9,946.9 1099.0,921.6 1120.2,756.1 1141.3,960.0 1162.5,961.4 1183.7,960.0 1204.8,963.9 1226.0,963.9 1247.1,958.5 1268.3,963.9 1289.5,960.7 1310.6,963.9 1331.8,960.2 1352.9,949.8 1374.1,962.6 1395.2,963.5 1416.4,937.6 1437.6,963.9 1458.7,962.5 1479.9,962.9 1501.0,959.8 1522.2,957.6 1543.4,960.0 1564.5,959.8 1585.7,962.4 1606.8,957.0 1628.0,962.7"/><polyline stroke="#fb9a3c" points="711.8,948.6 733.0,951.6 754.1,941.0 775.3,967.1 796.4,940.2 817.6,958.4 838.8,955.4 859.9,941.2 881.1,958.9 902.2,960.9 923.4,960.2 944.6,942.1 965.7,958.9 986.9,955.0 1008.0,961.1 1029.2,950.2 1050.4,954.1 1071.5,862.4 1092.7,628.3 1113.8,885.8 1135.0,945.7 1156.2,957.3 1177.3,942.6 1198.5,943.4 1219.6,956.8 1240.8,945.6 1261.9,936.3 1283.1,956.1 1304.3,957.6 1325.4,964.9 1346.6,935.6 1367.7,941.7 1388.9,939.9 1410.1,943.9 1431.2,959.0 1452.4,965.9 1473.5,936.1 1494.7,953.6 1515.9,944.4 1537.0,957.1 1558.2,935.7 1579.3,957.1 1600.5,949.5 1621.7,944.5 1628.0,952.0"/><polyline stroke="#ffd778" points="697.0,954.2 718.2,956.5 739.3,956.1 760.5,956.9 781.6,954.4 802.8,939.6 824.0,949.7 845.1,955.4 866.3,857.2 887.4,942.7 908.6,935.8 929.8,951.9 950.9,813.0 972.1,949.0 993.2,950.8 1014.4,924.8 1035.5,950.0 1056.7,951.8 1077.9,950.2 1099.0,956.8 1120.2,952.7 1141.3,949.9 1162.5,943.9 1183.7,934.0 1204.8,959.5 1226.0,947.0 1247.1,942.4 1268.3,954.4 1289.5,941.7 1310.6,956.6 1331.8,929.1 1352.9,958.9 1374.1,954.4 1395.2,935.5 1416.4,944.9 1437.6,942.9 1458.7,945.2 1479.9,951.7 1501.0,941.9 1522.2,948.4 1543.4,934.3 1564.5,950.3 1585.7,956.1 1606.8,957.2 1628.0,954.9"/><polyline stroke="#ffd470" points="707.6,949.2 728.7,950.5 749.9,945.0 771.1,944.2 792.2,940.2 813.4,958.5 834.5,945.6 855.7,943.7 876.9,948.7 898.0,934.4 919.2,965.5 940.3,964.1 961.5,957.6 982.6,957.1 1003.8,957.7 1025.0,941.7 1046.1,943.9 1067.3,956.9 1088.4,939.0 1109.6,939.3 1130.8,947.4 1151.9,951.1 1173.1,961.0 1194.2,948.1 1215.4,946.6 1236.6,954.4 1257.7,965.6 1278.9,941.6 1300.0,939.5 1321.2,962.2 1342.4,945.8 1363.5,957.4 1384.7,943.1 1405.8,952.5 1427.0,955.2 1448.1,948.2 1469.3,936.6 1490.5,835.7 1511.6,657.4 1532.8,891.1 1553.9,952.5 1575.1,935.9 1596.3,965.6 1617.4,949.4 1628.0,965.1"/><polyline stroke="#fdb24c" points="697.0,930.1 718.2,946.1 739.3,945.7 760.5,923.4 781.6,914.4 802.8,931.3 824.0,951.3 845.1,948.3 866.3,929.7 887.4,935.5 908.6,949.9 929.8,941.6 950.9,940.6 972.1,944.1 993.2,946.9 1014.4,944.0 1035.5,947.8 1056.7,940.7 1077.9,950.4 1099.0,950.0 1120.2,916.9 1141.3,950.2 1162.5,935.2 1183.7,942.8 1204.8,921.7 1226.0,947.7 1247.1,948.7 1268.3,934.3 1289.5,950.5 1310.6,945.7 1331.8,948.1 1352.9,951.4 1374.1,943.3 1395.2,948.3 1416.4,934.0 1437.6,945.9 1458.7,938.9 1479.9,929.7 1501.0,943.3 1522.2,939.7 1543.4,935.6 1564.5,934.9 1585.7,939.1 1606.8,941.7 1628.0,942.6"/><polyline stroke="#b00d26" points="697.0,818.4 718.2,915.0 739.3,803.4 760.5,946.6 781.6,796.2 802.8,918.8 824.0,765.5 845.1,874.4 866.3,889.8 887.4,902.8 908.6,902.6 929.8,925.5 950.9,823.1 972.1,865.6 993.2,844.2 1014.4,941.3 1035.5,816.4 1056.7,903.6 1077.9,869.7 1099.0,918.0 1120.2,864.1 1141.3,941.0 1162.5,782.7 1183.7,892.3 1204.8,847.5 1226.0,868.8 1247.1,847.6 1268.3,872.5 1289.5,834.0 1310.6,863.2 1331.8,827.4 1352.9,888.0 1374.1,778.2 1395.2,938.6 1416.4,793.2 1437.6,925.5 1458.7,887.6 1479.9,866.2 1501.0,768.5 1522.2,940.0 1543.4,803.8 1564.5,864.7 1585.7,885.0 1606.8,940.7 1628.0,827.3"/><polyline stroke="#ffd778" points="697.0,952.3 718.2,959.3 739.3,958.1 760.5,916.3 781.6,952.7 802.8,840.8 824.0,917.7 845.1,843.2 866.3,941.0 887.4,952.6 908.6,944.7 929.8,940.1 950.9,812.7 972.1,955.9 993.2,944.9 1014.4,953.5 1035.5,946.3 1056.7,948.9 1077.9,956.1 1099.0,837.4 1120.2,950.7 1141.3,754.2 1162.5,952.2 1183.7,951.3 1204.8,948.2 1226.0,959.9 1247.1,956.8 1268.3,945.2 1289.5,898.5 1310.6,921.2 1331.8,757.9 1352.9,953.5 1374.1,956.2 1395.2,957.9 1416.4,952.3 1437.6,951.6 1458.7,851.2 1479.9,957.4 1501.0,927.1 1522.2,943.6 1543.4,943.6 1564.5,956.4 1585.7,952.2 1606.8,944.4 1628.0,943.4"/><polyline stroke="#b00d26" points="697.0,880.0 718.2,885.1 739.3,868.3 760.5,829.2 781.6,866.3 802.8,870.2 824.0,942.8 845.1,857.9 866.3,903.1 887.4,888.5 908.6,933.3 929.8,770.2 950.9,882.7 972.1,785.8 993.2,940.5 1014.4,873.6 1035.5,953.1 1056.7,933.9 1077.9,933.4 1099.0,872.9 1120.2,926.6 1141.3,903.6 1162.5,890.8 1183.7,767.0 1204.8,889.6 1226.0,870.9 1247.1,925.7 1268.3,868.5 1289.5,939.8 1310.6,850.7 1331.8,897.7 1352.9,801.4 1374.1,922.1 1395.2,783.0 1416.4,908.9 1437.6,827.2 1458.7,888.3 1479.9,762.5 1501.0,951.1 1522.2,875.4 1543.4,951.6 1564.5,919.5 1585.7,899.9 1606.8,884.1 1628.0,936.6"/><polyline stroke="#ffd778" points="697.0,947.9 718.2,947.6 739.3,952.5 760.5,932.1 781.6,951.0 802.8,939.7 824.0,947.3 845.1,941.5 866.3,934.4 887.4,943.4 908.6,944.9 929.8,950.0 950.9,948.3 972.1,943.4 993.2,847.7 1014.4,934.3 1035.5,942.4 1056.7,931.7 1077.9,942.4 1099.0,864.7 1120.2,948.6 1141.3,947.9 1162.5,892.9 1183.7,941.9 1204.8,950.3 1226.0,943.1 1247.1,940.5 1268.3,947.7 1289.5,944.8 1310.6,940.6 1331.8,909.0 1352.9,877.9 1374.1,930.5 1395.2,949.1 1416.4,937.6 1437.6,947.0 1458.7,953.1 1479.9,948.2 1501.0,829.8 1522.2,948.2 1543.4,932.1 1564.5,946.6 1585.7,937.6 1606.8,942.4 1628.0,950.2"/><polyline stroke="#ffd778" points="697.0,953.8 718.2,962.1 739.3,960.9 760.5,963.6 781.6,949.1 802.8,954.9 824.0,960.9 845.1,960.0 866.3,959.4 887.4,947.8 908.6,955.3 929.8,928.7 950.9,960.0 972.1,961.5 993.2,955.5 1014.4,955.5 1035.5,955.9 1056.7,952.6 1077.9,963.9 1099.0,957.3 1120.2,849.7 1141.3,957.2 1162.5,957.6 1183.7,961.0 1204.8,953.6 1226.0,950.9 1247.1,952.1 1268.3,937.9 1289.5,951.2 1310.6,954.5 1331.8,947.0 1352.9,957.7 1374.1,905.8 1395.2,963.4 1416.4,945.4 1437.6,957.3 1458.7,957.3 1479.9,947.8 1501.0,962.8 1522.2,947.0 1543.4,951.5 1564.5,957.7 1585.7,958.0 1606.8,952.9 1628.0,951.1"/><polyline stroke="#b00d26" points="697.0,945.6 718.2,944.4 739.3,947.7 760.5,910.0 781.6,948.4 802.8,929.4 824.0,931.0 845.1,942.5 866.3,913.4 887.4,945.7 908.6,946.4 929.8,939.7 950.9,934.4 972.1,931.9 993.2,939.8 1014.4,882.9 1035.5,934.3 1056.7,948.0 1077.9,899.2 1099.0,931.9 1120.2,925.8 1141.3,939.6 1162.5,902.5 1183.7,946.0 1204.8,919.4 1226.0,938.5 1247.1,934.0 1268.3,915.9 1289.5,923.6 1310.6,933.0 1331.8,936.4 1352.9,928.4 1374.1,942.3 1395.2,901.0 1416.4,945.6 1437.6,913.6 1458.7,942.8 1479.9,945.4 1501.0,934.5 1522.2,946.3 1543.4,918.7 1564.5,920.0 1585.7,941.0 1606.8,934.3 1628.0,941.9"/><polyline stroke="#f7772f" points="697.0,925.6 718.2,926.8 739.3,937.4 760.5,913.1 781.6,943.4 802.8,899.4 824.0,868.7 845.1,951.2 866.3,935.6 887.4,935.5 908.6,949.8 929.8,908.3 950.9,961.8 972.1,925.0 993.2,925.6 1014.4,821.4 1035.5,910.5 1056.7,795.8 1077.9,935.8 1099.0,956.8 1120.2,938.3 1141.3,832.6 1162.5,805.5 1183.7,916.7 1204.8,877.5 1226.0,938.2 1247.1,933.7 1268.3,889.2 1289.5,914.0 1310.6,793.5 1331.8,955.0 1352.9,935.2 1374.1,842.7 1395.2,945.4 1416.4,919.8 1437.6,944.5 1458.7,930.1 1479.9,961.4 1501.0,853.2 1522.2,798.1 1543.4,804.2 1564.5,943.8 1585.7,915.8 1606.8,867.1 1628.0,909.6"/><polyline stroke="#fdb24c" points="697.0,946.2 718.2,946.9 739.3,948.7 760.5,956.4 781.6,962.2 802.8,958.6 824.0,963.9 845.1,956.9 866.3,871.2 887.4,963.9 908.6,872.8 929.8,959.4 950.9,963.8 972.1,963.9 993.2,949.8 1014.4,947.3 1035.5,963.9 1056.7,957.0 1077.9,963.9 1099.0,934.7 1120.2,955.0 1141.3,930.6 1162.5,954.7 1183.7,958.9 1204.8,963.0 1226.0,961.1 1247.1,962.4 1268.3,957.4 1289.5,963.9 1310.6,942.4 1331.8,962.7 1352.9,936.9 1374.1,963.2 1395.2,956.1 1416.4,963.9 1437.6,768.4 1458.7,957.1 1479.9,945.8 1501.0,956.9 1522.2,963.9 1543.4,951.5 1564.5,950.6 1585.7,955.6 1606.8,958.3 1628.0,957.5"/><polyline stroke="#fec660" points="697.0,948.6 718.2,945.4 739.3,939.1 760.5,934.3 781.6,951.2 802.8,922.9 824.0,922.3 845.1,939.8 866.3,946.0 887.4,950.4 908.6,934.5 929.8,938.7 950.9,939.7 972.1,947.9 993.2,940.3 1014.4,937.1 1035.5,930.7 1056.7,925.9 1077.9,952.4 1099.0,944.6 1120.2,931.6 1141.3,953.4 1162.5,931.3 1183.7,939.3 1204.8,944.6 1226.0,917.0 1247.1,930.6 1268.3,950.9 1289.5,951.2 1310.6,872.5 1331.8,928.5 1352.9,953.2 1374.1,950.0 1395.2,936.4 1416.4,948.2 1437.6,932.6 1458.7,930.0 1479.9,943.0 1501.0,924.4 1522.2,941.8 1543.4,945.7 1564.5,854.6 1585.7,939.1 1606.8,941.1 1628.0,942.9"/><polyline stroke="#e0381f" points="697.0,925.9 718.2,928.7 739.3,936.7 760.5,944.8 781.6,924.4 802.8,933.9 824.0,936.1 845.1,933.2 866.3,947.4 887.4,949.9 908.6,946.4 929.8,934.0 950.9,938.0 972.1,940.7 993.2,931.2 1014.4,929.7 1035.5,941.0 1056.7,944.6 1077.9,947.3 1099.0,936.8 1120.2,940.8 1141.3,938.9 1162.5,917.8 1183.7,925.5 1204.8,947.9 1226.0,944.2 1247.1,920.4 1268.3,930.3 1289.5,903.3 1310.6,931.0 1331.8,941.4 1352.9,922.3 1374.1,942.0 1395.2,934.1 1416.4,941.5 1437.6,935.9 1458.7,930.7 1479.9,940.1 1501.0,940.3 1522.2,903.5 1543.4,943.9 1564.5,941.6 1585.7,926.2 1606.8,948.8 1628.0,947.2"/><polyline stroke="#b00d26" points="707.6,952.3 728.7,953.3 749.9,956.8 771.1,953.5 792.2,939.5 813.4,939.2 834.5,966.8 855.7,934.6 876.9,835.1 898.0,715.6 919.2,903.5 940.3,966.3 961.5,966.3 982.6,935.8 1003.8,935.9 1025.0,955.0 1046.1,962.9 1067.3,943.1 1088.4,946.8 1109.6,948.5 1130.8,941.1 1151.9,951.2 1173.1,943.2 1194.2,946.4 1215.4,942.9 1236.6,953.5 1257.7,959.0 1278.9,962.5 1300.0,943.7 1321.2,947.1 1342.4,951.8 1363.5,933.9 1384.7,950.9 1405.8,952.6 1427.0,936.3 1448.1,946.0 1469.3,938.0 1490.5,953.5 1511.6,966.7 1532.8,957.9 1553.9,940.9 1575.1,950.4 1596.3,945.0 1617.4,939.9 1628.0,957.8"/><polyline stroke="#95052a" points="697.0,918.6 718.2,876.2 739.3,768.3 760.5,888.3 781.6,918.4 802.8,886.7 824.0,851.5 845.1,895.1 866.3,919.9 887.4,949.9 908.6,933.4 929.8,936.6 950.9,885.3 972.1,936.1 993.2,826.0 1014.4,866.9 1035.5,921.1 1056.7,913.9 1077.9,767.8 1099.0,868.3 1120.2,829.7 1141.3,935.6 1162.5,946.7 1183.7,873.2 1204.8,910.0 1226.0,902.4 1247.1,783.0 1268.3,884.1 1289.5,950.2 1310.6,870.7 1331.8,791.7 1352.9,924.1 1374.1,887.4 1395.2,911.2 1416.4,938.9 1437.6,880.9 1458.7,830.8 1479.9,931.1 1501.0,950.2 1522.2,887.4 1543.4,804.2 1564.5,896.3 1585.7,888.1 1606.8,890.5 1628.0,842.9"/><polyline stroke="#ffd778" points="697.0,942.8 718.2,947.0 739.3,939.2 760.5,950.6 781.6,943.1 802.8,946.8 824.0,953.5 845.1,952.5 866.3,953.2 887.4,954.0 908.6,935.3 929.8,938.5 950.9,951.0 972.1,954.2 993.2,930.9 1014.4,930.1 1035.5,940.5 1056.7,936.8 1077.9,924.9 1099.0,947.1 1120.2,942.0 1141.3,946.3 1162.5,955.7 1183.7,935.9 1204.8,954.1 1226.0,943.8 1247.1,939.5 1268.3,938.1 1289.5,945.6 1310.6,942.4 1331.8,857.2 1352.9,950.8 1374.1,950.8 1395.2,945.1 1416.4,953.4 1437.6,955.5 1458.7,936.3 1479.9,945.1 1501.0,952.7 1522.2,940.7 1543.4,746.2 1564.5,937.0 1585.7,932.1 1606.8,888.2 1628.0,946.1"/><polyline stroke="#f7772f" points="697.0,926.8 718.2,928.4 739.3,933.0 760.5,923.3 781.6,822.4 802.8,935.8 824.0,916.3 845.1,932.6 866.3,918.2 887.4,932.0 908.6,922.7 929.8,930.0 950.9,902.3 972.1,933.5 993.2,914.2 1014.4,938.2 1035.5,937.2 1056.7,784.2 1077.9,936.3 1099.0,916.7 1120.2,930.2 1141.3,930.4 1162.5,890.1 1183.7,931.5 1204.8,929.2 1226.0,937.8 1247.1,931.2 1268.3,919.7 1289.5,921.4 1310.6,917.4 1331.8,899.1 1352.9,917.2 1374.1,885.2 1395.2,920.2 1416.4,928.8 1437.6,910.0 1458.7,900.3 1479.9,924.1 1501.0,937.2 1522.2,909.8 1543.4,910.7 1564.5,918.5 1585.7,933.5 1606.8,921.4 1628.0,920.0"/><polyline stroke="#f7772f" points="697.0,960.1 718.2,938.8 739.3,951.4 760.5,929.8 781.6,953.4 802.8,938.0 824.0,960.3 845.1,957.8 866.3,946.1 887.4,815.1 908.6,926.6 929.8,955.3 950.9,959.5 972.1,957.5 993.2,882.9 1014.4,942.9 1035.5,914.7 1056.7,952.9 1077.9,957.1 1099.0,932.1 1120.2,944.9 1141.3,873.3 1162.5,948.6 1183.7,957.9 1204.8,960.2 1226.0,944.1 1247.1,938.3 1268.3,944.7 1289.5,954.5 1310.6,947.5 1331.8,957.4 1352.9,949.2 1374.1,954.2 1395.2,928.1 1416.4,957.7 1437.6,952.9 1458.7,945.1 1479.9,942.0 1501.0,936.7 1522.2,937.9 1543.4,850.5 1564.5,958.8 1585.7,949.0 1606.8,954.9 1628.0,933.4"/><polyline stroke="#e0381f" points="697.0,933.6 718.2,916.1 739.3,937.8 760.5,921.8 781.6,943.2 802.8,828.2 824.0,915.1 845.1,918.3 866.3,935.7 887.4,920.5 908.6,940.2 929.8,935.1 950.9,901.3 972.1,732.6 993.2,927.0 1014.4,940.2 1035.5,945.2 1056.7,942.7 1077.9,931.1 1099.0,934.3 1120.2,926.1 1141.3,938.9 1162.5,883.3 1183.7,936.4 1204.8,933.3 1226.0,937.3 1247.1,935.0 1268.3,936.8 1289.5,944.1 1310.6,926.8 1331.8,921.8 1352.9,943.1 1374.1,924.1 1395.2,940.4 1416.4,943.5 1437.6,932.0 1458.7,944.9 1479.9,849.7 1501.0,914.3 1522.2,914.0 1543.4,925.2 1564.5,828.2 1585.7,940.3 1606.8,931.2 1628.0,941.0"/><polyline stroke="#fdb24c" points="697.0,953.7 718.2,940.6 739.3,948.1 760.5,949.9 781.6,924.3 802.8,943.9 824.0,927.1 845.1,947.8 866.3,938.8 887.4,940.0 908.6,956.0 929.8,946.1 950.9,942.3 972.1,946.5 993.2,948.8 1014.4,940.9 1035.5,949.4 1056.7,939.0 1077.9,946.8 1099.0,949.8 1120.2,897.6 1141.3,945.8 1162.5,933.9 1183.7,827.4 1204.8,952.3 1226.0,949.4 1247.1,945.4 1268.3,943.3 1289.5,951.8 1310.6,943.9 1331.8,943.5 1352.9,939.9 1374.1,937.4 1395.2,952.2 1416.4,956.0 1437.6,952.9 1458.7,946.7 1479.9,948.2 1501.0,951.5 1522.2,954.1 1543.4,948.8 1564.5,940.8 1585.7,945.9 1606.8,950.3 1628.0,953.2"/><polyline stroke="#95052a" points="697.0,941.6 718.2,955.6 739.3,873.0 760.5,929.1 781.6,956.2 802.8,956.0 824.0,879.0 845.1,952.8 866.3,950.3 887.4,870.4 908.6,940.5 929.8,892.8 950.9,954.0 972.1,951.7 993.2,946.5 1014.4,954.5 1035.5,942.5 1056.7,890.6 1077.9,947.1 1099.0,947.0 1120.2,947.8 1141.3,948.4 1162.5,873.4 1183.7,939.4 1204.8,940.5 1226.0,948.8 1247.1,880.4 1268.3,949.5 1289.5,919.8 1310.6,952.5 1331.8,862.9 1352.9,944.1 1374.1,951.2 1395.2,938.8 1416.4,949.1 1437.6,941.4 1458.7,952.2 1479.9,938.2 1501.0,893.0 1522.2,920.0 1543.4,947.3 1564.5,900.1 1585.7,955.9 1606.8,940.5 1628.0,955.6"/><polyline stroke="#fb9139" points="697.0,935.8 718.2,824.2 739.3,937.2 760.5,918.3 781.6,932.5 802.8,918.6 824.0,927.3 845.1,923.1 866.3,843.4 887.4,937.3 908.6,926.1 929.8,936.4 950.9,938.3 972.1,925.8 993.2,920.8 1014.4,923.7 1035.5,926.0 1056.7,926.3 1077.9,935.4 1099.0,934.8 1120.2,934.0 1141.3,938.7 1162.5,935.7 1183.7,935.6 1204.8,934.8 1226.0,916.1 1247.1,782.0 1268.3,936.5 1289.5,921.8 1310.6,931.4 1331.8,937.9 1352.9,932.7 1374.1,918.4 1395.2,919.5 1416.4,910.4 1437.6,938.8 1458.7,929.4 1479.9,936.9 1501.0,841.5 1522.2,828.4 1543.4,921.3 1564.5,922.0 1585.7,913.2 1606.8,937.6 1628.0,931.0"/><polyline stroke="#ee5a27" points="697.0,944.4 718.2,964.0 739.3,939.2 760.5,957.7 781.6,937.0 802.8,941.6 824.0,954.1 845.1,942.2 866.3,934.1 887.4,949.9 908.6,957.0 929.8,950.7 950.9,938.6 972.1,941.7 993.2,966.0 1014.4,954.9 1035.5,940.7 1056.7,935.4 1077.9,960.5 1099.0,949.0 1120.2,946.4 1141.3,962.4 1162.5,942.3 1183.7,941.4 1204.8,961.9 1226.0,945.5 1247.1,962.4 1268.3,964.9 1289.5,936.9 1310.6,936.6 1331.8,963.4 1352.9,943.9 1374.1,955.2 1395.2,946.0 1416.4,955.9 1437.6,960.5 1458.7,946.8 1479.9,961.9 1501.0,936.7 1522.2,885.2 1543.4,570.1 1564.5,905.0 1585.7,965.9 1606.8,962.5 1628.0,951.4"/><polyline stroke="#fdb24c" points="697.0,948.5 718.2,947.8 739.3,946.1 760.5,918.0 781.6,939.3 802.8,936.2 824.0,942.1 845.1,937.8 866.3,939.5 887.4,949.8 908.6,941.2 929.8,944.8 950.9,944.0 972.1,932.0 993.2,925.9 1014.4,941.3 1035.5,940.6 1056.7,920.7 1077.9,937.6 1099.0,936.0 1120.2,945.1 1141.3,929.0 1162.5,939.2 1183.7,946.4 1204.8,944.6 1226.0,877.6 1247.1,922.4 1268.3,918.0 1289.5,939.9 1310.6,944.1 1331.8,931.8 1352.9,942.3 1374.1,936.2 1395.2,947.6 1416.4,933.7 1437.6,804.1 1458.7,928.6 1479.9,945.6 1501.0,926.0 1522.2,936.7 1543.4,811.8 1564.5,918.4 1585.7,934.0 1606.8,933.2 1628.0,946.2"/><polyline stroke="#f7772f" points="697.0,905.7 718.2,928.9 739.3,939.9 760.5,937.0 781.6,943.7 802.8,935.7 824.0,951.7 845.1,949.0 866.3,934.2 887.4,947.9 908.6,941.7 929.8,945.3 950.9,952.4 972.1,939.3 993.2,904.7 1014.4,937.7 1035.5,947.1 1056.7,951.5 1077.9,918.5 1099.0,948.9 1120.2,941.2 1141.3,925.7 1162.5,910.6 1183.7,937.6 1204.8,940.6 1226.0,938.7 1247.1,821.8 1268.3,940.0 1289.5,937.9 1310.6,934.8 1331.8,927.9 1352.9,950.2 1374.1,924.9 1395.2,949.3 1416.4,942.9 1437.6,939.2 1458.7,924.3 1479.9,937.3 1501.0,943.9 1522.2,765.3 1543.4,937.5 1564.5,943.0 1585.7,948.7 1606.8,945.3 1628.0,935.4"/><polyline stroke="#fec660" points="697.0,931.0 718.2,931.2 739.3,946.5 760.5,940.5 781.6,915.1 802.8,915.1 824.0,928.1 845.1,929.9 866.3,941.3 887.4,948.9 908.6,943.1 929.8,943.5 950.9,917.1 972.1,930.2 993.2,948.3 1014.4,935.9 1035.5,940.4 1056.7,926.4 1077.9,944.5 1099.0,942.1 1120.2,937.5 1141.3,946.3 1162.5,942.9 1183.7,866.4 1204.8,946.7 1226.0,933.3 1247.1,753.5 1268.3,937.6 1289.5,941.1 1310.6,943.4 1331.8,948.9 1352.9,924.8 1374.1,946.7 1395.2,941.5 1416.4,944.4 1437.6,935.5 1458.7,906.4 1479.9,933.7 1501.0,911.7 1522.2,917.0 1543.4,940.8 1564.5,945.7 1585.7,939.8 1606.8,934.9 1628.0,941.7"/><polyline stroke="#fec660" points="697.0,931.5 718.2,920.2 739.3,923.4 760.5,923.8 781.6,810.8 802.8,918.5 824.0,938.0 845.1,925.2 866.3,924.1 887.4,919.6 908.6,922.3 929.8,933.4 950.9,922.9 972.1,928.8 993.2,935.6 1014.4,936.2 1035.5,937.0 1056.7,935.4 1077.9,925.7 1099.0,925.0 1120.2,917.6 1141.3,938.0 1162.5,938.4 1183.7,933.7 1204.8,936.4 1226.0,918.3 1247.1,930.4 1268.3,925.8 1289.5,932.4 1310.6,923.3 1331.8,916.9 1352.9,934.9 1374.1,927.9 1395.2,934.6 1416.4,936.3 1437.6,938.0 1458.7,926.8 1479.9,926.0 1501.0,935.0 1522.2,924.8 1543.4,932.2 1564.5,749.5 1585.7,764.4 1606.8,932.4 1628.0,935.3"/><polyline stroke="#ffe59a" points="697.0,953.1 718.2,952.7 739.3,960.2 760.5,952.8 781.6,962.8 802.8,961.3 824.0,836.1 845.1,963.9 866.3,963.9 887.4,958.0 908.6,959.0 929.8,938.4 950.9,817.9 972.1,963.9 993.2,963.9 1014.4,958.2 1035.5,961.0 1056.7,948.8 1077.9,963.9 1099.0,939.9 1120.2,945.8 1141.3,921.4 1162.5,957.6 1183.7,963.9 1204.8,774.8 1226.0,943.0 1247.1,953.7 1268.3,908.5 1289.5,950.0 1310.6,952.1 1331.8,948.8 1352.9,939.9 1374.1,952.7 1395.2,764.5 1416.4,952.4 1437.6,952.9 1458.7,950.1 1479.9,963.9 1501.0,962.1 1522.2,960.3 1543.4,939.7 1564.5,963.9 1585.7,942.1 1606.8,935.3 1628.0,963.9"/><polyline stroke="#ffe59a" points="697.0,935.7 718.2,940.4 739.3,915.1 760.5,931.8 781.6,939.8 802.8,939.1 824.0,931.9 845.1,926.5 866.3,941.3 887.4,941.9 908.6,924.9 929.8,940.0 950.9,903.9 972.1,936.6 993.2,930.3 1014.4,926.7 1035.5,919.5 1056.7,938.7 1077.9,935.9 1099.0,940.1 1120.2,931.6 1141.3,934.9 1162.5,940.9 1183.7,923.5 1204.8,901.9 1226.0,941.2 1247.1,926.5 1268.3,940.4 1289.5,940.7 1310.6,933.9 1331.8,909.4 1352.9,820.3 1374.1,912.3 1395.2,937.4 1416.4,937.3 1437.6,930.0 1458.7,905.8 1479.9,908.2 1501.0,941.5 1522.2,935.3 1543.4,941.4 1564.5,923.1 1585.7,939.2 1606.8,930.8 1628.0,914.2"/><polyline stroke="#e0381f" points="697.0,817.3 718.2,926.9 739.3,942.5 760.5,931.4 781.6,905.2 802.8,925.8 824.0,837.2 845.1,925.8 866.3,932.8 887.4,925.5 908.6,934.6 929.8,934.0 950.9,731.5 972.1,928.1 993.2,924.9 1014.4,935.9 1035.5,911.0 1056.7,936.7 1077.9,928.7 1099.0,934.3 1120.2,936.5 1141.3,919.7 1162.5,763.7 1183.7,939.7 1204.8,879.1 1226.0,942.5 1247.1,924.9 1268.3,739.3 1289.5,941.6 1310.6,932.0 1331.8,932.5 1352.9,939.8 1374.1,923.7 1395.2,945.1 1416.4,940.9 1437.6,944.4 1458.7,941.3 1479.9,939.6 1501.0,932.0 1522.2,938.1 1543.4,930.4 1564.5,934.8 1585.7,939.0 1606.8,925.4 1628.0,943.2"/><polyline stroke="#fdb24c" points="697.0,940.7 718.2,947.5 739.3,933.5 760.5,941.4 781.6,926.8 802.8,950.6 824.0,951.9 845.1,939.7 866.3,934.2 887.4,940.9 908.6,952.0 929.8,939.8 950.9,943.3 972.1,923.4 993.2,919.4 1014.4,900.7 1035.5,780.9 1056.7,949.5 1077.9,935.2 1099.0,925.6 1120.2,936.7 1141.3,753.1 1162.5,936.2 1183.7,769.8 1204.8,948.1 1226.0,932.0 1247.1,951.9 1268.3,922.7 1289.5,951.4 1310.6,948.6 1331.8,929.2 1352.9,943.8 1374.1,938.8 1395.2,941.3 1416.4,949.4 1437.6,944.9 1458.7,946.6 1479.9,950.1 1501.0,950.6 1522.2,941.6 1543.4,951.7 1564.5,945.3 1585.7,934.3 1606.8,848.7 1628.0,950.0"/><polyline stroke="#fb9139" points="697.0,948.2 718.2,950.6 739.3,940.9 760.5,953.1 781.6,938.5 802.8,923.9 824.0,938.3 845.1,951.3 866.3,946.2 887.4,947.3 908.6,948.3 929.8,952.8 950.9,942.5 972.1,946.0 993.2,939.6 1014.4,931.2 1035.5,925.8 1056.7,920.5 1077.9,892.4 1099.0,945.8 1120.2,951.3 1141.3,829.1 1162.5,942.7 1183.7,929.3 1204.8,946.9 1226.0,948.8 1247.1,948.0 1268.3,952.6 1289.5,929.7 1310.6,944.6 1331.8,938.9 1352.9,746.5 1374.1,944.2 1395.2,936.6 1416.4,934.7 1437.6,849.8 1458.7,935.0 1479.9,944.0 1501.0,941.9 1522.2,944.6 1543.4,943.4 1564.5,936.5 1585.7,948.5 1606.8,937.7 1628.0,942.5"/><polyline stroke="#7a0327" points="697.0,933.0 718.2,893.7 739.3,887.6 760.5,940.8 781.6,770.0 802.8,939.5 824.0,836.0 845.1,938.4 866.3,949.2 887.4,943.3 908.6,880.8 929.8,947.9 950.9,793.0 972.1,872.3 993.2,833.7 1014.4,924.3 1035.5,826.1 1056.7,866.8 1077.9,882.9 1099.0,889.0 1120.2,807.5 1141.3,906.6 1162.5,902.1 1183.7,896.0 1204.8,818.0 1226.0,929.8 1247.1,905.6 1268.3,940.9 1289.5,841.6 1310.6,885.4 1331.8,796.8 1352.9,892.9 1374.1,802.7 1395.2,944.8 1416.4,812.4 1437.6,931.3 1458.7,909.0 1479.9,923.5 1501.0,950.5 1522.2,886.4 1543.4,870.5 1564.5,865.5 1585.7,932.7 1606.8,942.6 1628.0,892.0"/><polyline stroke="#e0381f" points="697.0,931.6 718.2,930.7 739.3,928.2 760.5,919.2 781.6,744.3 802.8,918.9 824.0,923.7 845.1,923.0 866.3,925.9 887.4,942.7 908.6,928.8 929.8,932.5 950.9,896.7 972.1,935.8 993.2,918.9 1014.4,939.4 1035.5,932.4 1056.7,941.0 1077.9,923.9 1099.0,921.3 1120.2,915.2 1141.3,933.2 1162.5,935.7 1183.7,920.9 1204.8,905.0 1226.0,935.5 1247.1,940.6 1268.3,931.9 1289.5,922.7 1310.6,944.6 1331.8,935.4 1352.9,926.4 1374.1,935.5 1395.2,941.3 1416.4,911.6 1437.6,939.4 1458.7,906.2 1479.9,924.2 1501.0,940.1 1522.2,921.1 1543.4,918.8 1564.5,931.7 1585.7,942.2 1606.8,943.3 1628.0,944.0"/><polyline stroke="#f05a28" points="697.0,934.6 718.2,926.0 739.3,936.0 760.5,929.6 781.6,936.7 802.8,851.9 824.0,925.3 845.1,921.3 866.3,911.6 887.4,790.8 908.6,927.9 929.8,927.3 950.9,916.9 972.1,942.4 993.2,938.7 1014.4,940.7 1035.5,915.1 1056.7,940.9 1077.9,932.8 1099.0,763.0 1120.2,890.1 1141.3,945.2 1162.5,913.5 1183.7,931.2 1204.8,927.4 1226.0,917.3 1247.1,933.4 1268.3,882.4 1289.5,753.0 1310.6,941.8 1331.8,909.6 1352.9,927.0 1374.1,805.1 1395.2,922.1 1416.4,928.6 1437.6,936.5 1458.7,942.7 1479.9,924.0 1501.0,917.3 1522.2,910.7 1543.4,928.7 1564.5,942.4 1585.7,939.5 1606.8,937.3 1628.0,934.8"/><polyline stroke="#fb9139" points="697.0,824.6 718.2,931.1 739.3,932.4 760.5,930.9 781.6,927.5 802.8,775.4 824.0,918.0 845.1,918.7 866.3,926.2 887.4,923.7 908.6,935.7 929.8,923.8 950.9,923.4 972.1,930.3 993.2,922.7 1014.4,735.4 1035.5,926.1 1056.7,908.1 1077.9,925.4 1099.0,917.1 1120.2,912.0 1141.3,937.9 1162.5,762.8 1183.7,922.1 1204.8,936.1 1226.0,934.5 1247.1,930.4 1268.3,931.0 1289.5,936.4 1310.6,907.0 1331.8,931.3 1352.9,786.9 1374.1,914.4 1395.2,925.1 1416.4,929.2 1437.6,912.8 1458.7,937.9 1479.9,858.0 1501.0,902.2 1522.2,930.7 1543.4,924.0 1564.5,927.1 1585.7,762.0 1606.8,935.8 1628.0,915.8"/><polyline stroke="#ffd778" points="697.0,958.1 718.2,948.3 739.3,944.8 760.5,956.5 781.6,945.7 802.8,958.0 824.0,905.7 845.1,798.4 866.3,956.4 887.4,951.0 908.6,953.9 929.8,942.9 950.9,935.3 972.1,800.8 993.2,955.0 1014.4,939.5 1035.5,935.3 1056.7,954.5 1077.9,953.1 1099.0,959.1 1120.2,952.0 1141.3,763.2 1162.5,948.6 1183.7,927.7 1204.8,953.5 1226.0,936.7 1247.1,913.2 1268.3,944.9 1289.5,949.2 1310.6,955.2 1331.8,930.6 1352.9,944.4 1374.1,777.6 1395.2,941.8 1416.4,759.3 1437.6,946.9 1458.7,956.1 1479.9,792.6 1501.0,955.0 1522.2,946.2 1543.4,954.7 1564.5,955.9 1585.7,945.3 1606.8,953.5 1628.0,831.7"/><polyline stroke="#fdaf48" points="703.3,961.5 724.5,962.6 745.7,956.2 766.8,966.3 788.0,938.9 809.1,899.8 830.3,681.7 851.5,919.0 872.6,943.5 893.8,965.1 914.9,967.0 936.1,940.2 957.3,940.4 978.4,935.3 999.6,953.8 1020.7,962.3 1041.9,939.8 1063.1,935.7 1084.2,935.5 1105.4,956.2 1126.5,945.4 1147.7,962.7 1168.8,965.5 1190.0,967.3 1211.2,936.1 1232.3,944.6 1253.5,937.5 1274.6,950.9 1295.8,964.9 1317.0,949.1 1338.1,934.0 1359.3,940.7 1380.4,959.2 1401.6,947.2 1422.8,950.5 1443.9,954.3 1465.1,948.5 1486.2,948.1 1507.4,959.7 1528.6,943.2 1549.7,945.2 1570.9,938.8 1592.0,936.0 1613.2,967.1 1628.0,955.5"/><polyline stroke="#f7772f" points="697.0,793.2 718.2,941.8 739.3,915.3 760.5,889.1 781.6,801.6 802.8,928.0 824.0,835.1 845.1,916.7 866.3,943.9 887.4,960.2 908.6,889.3 929.8,923.1 950.9,868.3 972.1,949.8 993.2,960.2 1014.4,931.4 1035.5,914.4 1056.7,949.1 1077.9,926.6 1099.0,946.0 1120.2,825.1 1141.3,948.2 1162.5,840.7 1183.7,804.1 1204.8,939.3 1226.0,954.1 1247.1,924.6 1268.3,888.0 1289.5,880.1 1310.6,938.8 1331.8,950.9 1352.9,937.3 1374.1,930.0 1395.2,911.0 1416.4,841.1 1437.6,928.8 1458.7,885.3 1479.9,890.7 1501.0,946.8 1522.2,950.6 1543.4,917.0 1564.5,932.0 1585.7,902.2 1606.8,880.9 1628.0,928.7"/><polyline stroke="#fb9139" points="697.0,816.7 718.2,947.2 739.3,919.0 760.5,938.6 781.6,846.5 802.8,957.7 824.0,936.0 845.1,945.0 866.3,949.2 887.4,913.5 908.6,930.9 929.8,928.5 950.9,908.4 972.1,922.7 993.2,943.9 1014.4,934.9 1035.5,951.9 1056.7,806.6 1077.9,948.0 1099.0,916.4 1120.2,904.3 1141.3,907.5 1162.5,881.9 1183.7,948.2 1204.8,927.2 1226.0,854.0 1247.1,955.9 1268.3,795.8 1289.5,953.6 1310.6,942.0 1331.8,927.0 1352.9,947.6 1374.1,945.2 1395.2,954.4 1416.4,948.1 1437.6,942.8 1458.7,880.0 1479.9,955.2 1501.0,938.4 1522.2,955.6 1543.4,951.2 1564.5,919.3 1585.7,815.6 1606.8,793.9 1628.0,935.1"/><polyline stroke="#ffd778" points="697.0,949.0 718.2,949.8 739.3,855.0 760.5,947.5 781.6,951.3 802.8,950.5 824.0,937.4 845.1,949.7 866.3,935.2 887.4,925.6 908.6,948.5 929.8,936.9 950.9,796.1 972.1,939.8 993.2,923.2 1014.4,941.3 1035.5,939.4 1056.7,943.6 1077.9,747.7 1099.0,949.0 1120.2,931.8 1141.3,939.3 1162.5,948.2 1183.7,945.1 1204.8,940.0 1226.0,946.9 1247.1,950.7 1268.3,945.4 1289.5,955.0 1310.6,947.4 1331.8,946.5 1352.9,940.2 1374.1,943.7 1395.2,952.9 1416.4,929.7 1437.6,940.7 1458.7,955.5 1479.9,943.0 1501.0,951.8 1522.2,953.6 1543.4,952.9 1564.5,951.5 1585.7,948.3 1606.8,941.3 1628.0,953.7"/><polyline stroke="#ffd778" points="697.0,941.8 718.2,939.3 739.3,923.9 760.5,932.9 781.6,941.2 802.8,913.9 824.0,927.7 845.1,918.7 866.3,931.9 887.4,933.3 908.6,936.1 929.8,924.7 950.9,936.5 972.1,761.9 993.2,927.3 1014.4,936.7 1035.5,927.8 1056.7,941.0 1077.9,933.4 1099.0,940.0 1120.2,924.4 1141.3,936.0 1162.5,932.7 1183.7,920.0 1204.8,912.9 1226.0,900.4 1247.1,940.1 1268.3,941.9 1289.5,927.7 1310.6,916.6 1331.8,917.6 1352.9,922.6 1374.1,936.5 1395.2,921.4 1416.4,933.7 1437.6,758.9 1458.7,925.3 1479.9,927.9 1501.0,935.0 1522.2,922.4 1543.4,931.7 1564.5,941.0 1585.7,933.5 1606.8,934.6 1628.0,914.6"/><polyline stroke="#b00d26" points="697.0,854.5 718.2,881.2 739.3,920.0 760.5,880.8 781.6,889.2 802.8,892.1 824.0,919.8 845.1,888.3 866.3,826.6 887.4,882.3 908.6,926.2 929.8,866.1 950.9,899.7 972.1,952.2 993.2,857.4 1014.4,891.4 1035.5,783.3 1056.7,893.6 1077.9,921.2 1099.0,893.9 1120.2,876.9 1141.3,921.0 1162.5,873.1 1183.7,889.8 1204.8,865.1 1226.0,905.5 1247.1,868.4 1268.3,876.2 1289.5,909.3 1310.6,889.5 1331.8,885.9 1352.9,937.4 1374.1,899.7 1395.2,891.9 1416.4,808.5 1437.6,881.9 1458.7,886.9 1479.9,950.7 1501.0,832.4 1522.2,893.3 1543.4,800.4 1564.5,895.1 1585.7,828.4 1606.8,932.4 1628.0,872.7"/><polyline stroke="#ffd778" points="697.0,911.1 718.2,863.6 739.3,847.7 760.5,918.6 781.6,945.3 802.8,887.8 824.0,960.9 845.1,816.6 866.3,914.0 887.4,874.3 908.6,852.8 929.8,929.0 950.9,922.3 972.1,821.1 993.2,927.4 1014.4,956.0 1035.5,917.3 1056.7,862.3 1077.9,939.2 1099.0,942.6 1120.2,917.0 1141.3,962.0 1162.5,944.3 1183.7,919.7 1204.8,914.3 1226.0,887.3 1247.1,830.6 1268.3,936.0 1289.5,936.8 1310.6,931.3 1331.8,904.1 1352.9,935.7 1374.1,874.7 1395.2,890.7 1416.4,961.8 1437.6,914.1 1458.7,911.3 1479.9,907.6 1501.0,948.0 1522.2,937.2 1543.4,838.3 1564.5,929.1 1585.7,902.7 1606.8,916.0 1628.0,917.6"/><polyline stroke="#fb9139" points="709.7,957.0 730.9,949.0 752.0,957.9 773.2,961.0 794.3,936.9 815.5,956.9 836.7,960.3 857.8,955.2 879.0,950.0 900.1,955.1 921.3,952.5 942.4,950.5 963.6,955.9 984.8,942.5 1005.9,960.0 1027.1,944.5 1048.2,940.0 1069.4,965.3 1090.6,890.1 1111.7,676.8 1132.9,929.0 1154.0,946.3 1175.2,959.9 1196.4,938.5 1217.5,948.4 1238.7,952.9 1259.8,959.4 1281.0,944.7 1302.2,965.3 1323.3,935.1 1344.5,954.1 1365.6,943.3 1386.8,960.3 1407.9,942.8 1429.1,953.2 1450.3,947.6 1471.4,952.3 1492.6,954.6 1513.7,959.2 1534.9,939.3 1556.1,935.2 1577.2,963.5 1598.4,957.2 1619.5,961.7 1628.0,936.7"/><polyline stroke="#ffe59a" points="697.0,938.9 718.2,909.9 739.3,923.2 760.5,934.6 781.6,923.6 802.8,927.7 824.0,938.3 845.1,925.4 866.3,931.4 887.4,936.4 908.6,914.4 929.8,906.0 950.9,939.0 972.1,931.7 993.2,922.5 1014.4,925.8 1035.5,926.5 1056.7,870.7 1077.9,923.1 1099.0,937.1 1120.2,918.6 1141.3,937.0 1162.5,924.8 1183.7,923.5 1204.8,924.2 1226.0,925.9 1247.1,925.8 1268.3,904.5 1289.5,936.2 1310.6,930.7 1331.8,922.5 1352.9,930.1 1374.1,933.4 1395.2,910.9 1416.4,795.2 1437.6,846.1 1458.7,925.5 1479.9,937.8 1501.0,916.1 1522.2,932.5 1543.4,936.3 1564.5,929.4 1585.7,928.0 1606.8,930.7 1628.0,928.0"/><polyline stroke="#f0602a" points="701.2,946.2 722.4,964.6 743.6,945.4 764.7,945.0 785.9,962.6 807.0,941.4 828.2,948.7 849.3,934.3 870.5,939.7 891.7,957.3 912.8,943.6 934.0,956.2 955.1,886.5 976.3,659.8 997.5,860.9 1018.6,937.1 1039.8,939.3 1060.9,936.2 1082.1,942.4 1103.3,966.9 1124.4,935.1 1145.6,957.2 1166.7,946.9 1187.9,963.1 1209.1,942.6 1230.2,949.0 1251.4,939.1 1272.5,964.1 1293.7,957.6 1314.8,940.6 1336.0,956.8 1357.2,958.5 1378.3,952.0 1399.5,945.6 1420.6,964.1 1441.8,949.2 1463.0,950.5 1484.1,943.5 1505.3,938.5 1526.4,958.4 1547.6,967.4 1568.8,959.4 1589.9,945.3 1611.1,943.0 1628.0,937.1"/><polyline stroke="#fdb24c" points="697.0,950.3 718.2,913.2 739.3,940.2 760.5,752.3 781.6,944.3 802.8,924.1 824.0,944.1 845.1,945.4 866.3,945.9 887.4,947.4 908.6,940.7 929.8,945.4 950.9,795.3 972.1,936.1 993.2,948.8 1014.4,943.3 1035.5,943.7 1056.7,933.0 1077.9,944.3 1099.0,936.7 1120.2,759.2 1141.3,945.1 1162.5,782.9 1183.7,931.5 1204.8,947.5 1226.0,931.9 1247.1,930.1 1268.3,946.9 1289.5,950.6 1310.6,933.5 1331.8,941.2 1352.9,950.2 1374.1,948.9 1395.2,946.3 1416.4,928.7 1437.6,950.0 1458.7,930.8 1479.9,942.5 1501.0,940.7 1522.2,937.8 1543.4,763.5 1564.5,913.7 1585.7,944.4 1606.8,806.6 1628.0,950.1"/><polyline stroke="#95052a" points="697.0,867.6 718.2,866.4 739.3,843.7 760.5,904.9 781.6,943.3 802.8,884.3 824.0,874.0 845.1,949.9 866.3,944.8 887.4,921.9 908.6,770.0 929.8,921.9 950.9,903.0 972.1,924.5 993.2,867.0 1014.4,946.0 1035.5,800.0 1056.7,861.4 1077.9,883.8 1099.0,862.3 1120.2,837.0 1141.3,931.4 1162.5,782.0 1183.7,911.3 1204.8,882.9 1226.0,868.8 1247.1,825.6 1268.3,876.0 1289.5,794.4 1310.6,865.7 1331.8,880.6 1352.9,943.4 1374.1,870.7 1395.2,875.4 1416.4,830.9 1437.6,861.2 1458.7,863.3 1479.9,911.5 1501.0,794.7 1522.2,909.1 1543.4,837.3 1564.5,939.7 1585.7,760.8 1606.8,864.8 1628.0,907.2"/><polyline stroke="#fdb24c" points="697.0,957.7 718.2,957.2 739.3,953.0 760.5,946.2 781.6,947.7 802.8,957.3 824.0,948.2 845.1,929.9 866.3,943.3 887.4,947.2 908.6,949.6 929.8,934.5 950.9,939.8 972.1,932.9 993.2,930.2 1014.4,958.6 1035.5,943.9 1056.7,937.8 1077.9,957.3 1099.0,956.1 1120.2,940.5 1141.3,933.5 1162.5,935.4 1183.7,952.9 1204.8,959.0 1226.0,958.6 1247.1,939.4 1268.3,954.9 1289.5,952.5 1310.6,943.0 1331.8,945.6 1352.9,952.8 1374.1,943.3 1395.2,846.7 1416.4,938.9 1437.6,939.4 1458.7,945.3 1479.9,941.2 1501.0,954.7 1522.2,948.6 1543.4,763.9 1564.5,956.3 1585.7,933.2 1606.8,936.3 1628.0,957.3"/><polyline stroke="#fdb24c" points="697.0,933.9 718.2,926.8 739.3,939.6 760.5,930.1 781.6,933.1 802.8,942.9 824.0,936.3 845.1,929.6 866.3,943.2 887.4,951.0 908.6,815.4 929.8,949.7 950.9,930.7 972.1,937.7 993.2,935.6 1014.4,847.9 1035.5,812.4 1056.7,948.2 1077.9,947.8 1099.0,946.7 1120.2,937.2 1141.3,947.8 1162.5,952.2 1183.7,938.5 1204.8,947.4 1226.0,943.2 1247.1,947.8 1268.3,934.5 1289.5,942.4 1310.6,949.8 1331.8,944.6 1352.9,934.0 1374.1,934.4 1395.2,935.6 1416.4,948.5 1437.6,944.8 1458.7,952.6 1479.9,942.4 1501.0,931.0 1522.2,952.7 1543.4,933.7 1564.5,933.8 1585.7,946.3 1606.8,943.7 1628.0,945.5"/><polyline stroke="#ffd778" points="697.0,924.8 718.2,928.5 739.3,931.8 760.5,920.3 781.6,937.4 802.8,933.6 824.0,923.7 845.1,921.9 866.3,919.6 887.4,936.2 908.6,925.8 929.8,934.4 950.9,930.9 972.1,936.4 993.2,917.9 1014.4,899.9 1035.5,938.5 1056.7,936.3 1077.9,923.9 1099.0,936.5 1120.2,920.6 1141.3,924.7 1162.5,897.9 1183.7,935.8 1204.8,936.3 1226.0,935.6 1247.1,936.0 1268.3,917.3 1289.5,903.5 1310.6,764.1 1331.8,928.4 1352.9,929.0 1374.1,929.3 1395.2,933.5 1416.4,923.5 1437.6,936.2 1458.7,928.6 1479.9,937.0 1501.0,926.3 1522.2,881.4 1543.4,930.5 1564.5,930.0 1585.7,922.7 1606.8,934.1 1628.0,909.0"/><polyline stroke="#7a0327" points="697.0,938.2 718.2,802.2 739.3,866.6 760.5,913.6 781.6,863.4 802.8,882.2 824.0,881.4 845.1,884.3 866.3,902.7 887.4,905.4 908.6,921.0 929.8,880.9 950.9,870.4 972.1,767.7 993.2,948.3 1014.4,883.6 1035.5,916.6 1056.7,856.8 1077.9,915.7 1099.0,883.5 1120.2,949.8 1141.3,936.7 1162.5,906.4 1183.7,820.6 1204.8,945.5 1226.0,876.1 1247.1,903.3 1268.3,898.1 1289.5,874.3 1310.6,887.9 1331.8,903.5 1352.9,815.4 1374.1,918.5 1395.2,886.4 1416.4,869.1 1437.6,831.4 1458.7,877.1 1479.9,875.1 1501.0,924.5 1522.2,789.1 1543.4,877.7 1564.5,873.2 1585.7,945.7 1606.8,879.2 1628.0,913.7"/><polyline stroke="#ffd778" points="697.0,944.5 718.2,950.1 739.3,923.1 760.5,927.1 781.6,952.7 802.8,939.8 824.0,929.5 845.1,943.2 866.3,935.7 887.4,941.9 908.6,921.3 929.8,935.6 950.9,931.8 972.1,953.3 993.2,945.5 1014.4,948.7 1035.5,931.3 1056.7,947.2 1077.9,925.0 1099.0,931.5 1120.2,934.8 1141.3,950.4 1162.5,954.6 1183.7,941.9 1204.8,944.9 1226.0,944.3 1247.1,940.4 1268.3,898.4 1289.5,948.1 1310.6,937.8 1331.8,946.7 1352.9,825.1 1374.1,951.8 1395.2,954.9 1416.4,954.9 1437.6,948.3 1458.7,953.9 1479.9,954.9 1501.0,948.7 1522.2,943.2 1543.4,937.9 1564.5,948.9 1585.7,837.4 1606.8,926.8 1628.0,940.6"/><polyline stroke="#ffe59a" points="697.0,938.1 718.2,939.0 739.3,914.2 760.5,935.8 781.6,893.1 802.8,925.6 824.0,941.9 845.1,936.3 866.3,931.5 887.4,861.7 908.6,940.1 929.8,940.6 950.9,926.1 972.1,923.7 993.2,941.0 1014.4,938.5 1035.5,925.6 1056.7,927.1 1077.9,897.8 1099.0,922.4 1120.2,929.8 1141.3,926.7 1162.5,942.1 1183.7,913.2 1204.8,927.7 1226.0,909.3 1247.1,930.7 1268.3,932.1 1289.5,764.7 1310.6,934.2 1331.8,895.6 1352.9,937.7 1374.1,907.2 1395.2,753.0 1416.4,938.9 1437.6,939.0 1458.7,936.4 1479.9,940.7 1501.0,929.3 1522.2,832.1 1543.4,920.3 1564.5,942.5 1585.7,939.2 1606.8,933.4 1628.0,926.7"/><polyline stroke="#95052a" points="701.2,946.3 722.4,943.1 743.6,935.7 764.7,946.9 785.9,855.4 807.0,720.5 828.2,890.7 849.3,964.6 870.5,944.6 891.7,963.7 912.8,967.1 934.0,954.7 955.1,957.5 976.3,945.4 997.5,957.5 1018.6,942.6 1039.8,936.7 1060.9,955.6 1082.1,941.4 1103.3,955.5 1124.4,953.9 1145.6,938.6 1166.7,961.6 1187.9,938.6 1209.1,943.5 1230.2,934.7 1251.4,942.9 1272.5,941.4 1293.7,955.4 1314.8,964.9 1336.0,956.8 1357.2,935.7 1378.3,960.7 1399.5,947.1 1420.6,936.9 1441.8,959.4 1463.0,957.4 1484.1,954.7 1505.3,963.7 1526.4,965.9 1547.6,964.1 1568.8,948.6 1589.9,940.7 1611.1,944.0 1628.0,940.0"/><polyline stroke="#f05a28" points="697.0,938.7 718.2,939.7 739.3,932.7 760.5,798.8 781.6,939.9 802.8,923.7 824.0,943.4 845.1,927.6 866.3,942.9 887.4,924.3 908.6,929.7 929.8,933.4 950.9,934.4 972.1,938.3 993.2,935.5 1014.4,943.2 1035.5,934.6 1056.7,929.2 1077.9,928.8 1099.0,922.8 1120.2,942.6 1141.3,943.1 1162.5,937.5 1183.7,937.9 1204.8,931.7 1226.0,939.6 1247.1,930.1 1268.3,944.7 1289.5,942.9 1310.6,939.6 1331.8,930.4 1352.9,906.9 1374.1,938.4 1395.2,935.1 1416.4,932.4 1437.6,911.2 1458.7,942.9 1479.9,918.2 1501.0,941.2 1522.2,922.7 1543.4,938.8 1564.5,904.5 1585.7,936.4 1606.8,804.3 1628.0,938.9"/><polyline stroke="#f7772f" points="697.0,938.8 718.2,926.5 739.3,928.5 760.5,942.8 781.6,935.9 802.8,939.3 824.0,883.6 845.1,924.0 866.3,941.4 887.4,946.0 908.6,935.5 929.8,943.1 950.9,941.2 972.1,941.0 993.2,936.0 1014.4,927.3 1035.5,927.3 1056.7,919.6 1077.9,945.8 1099.0,930.1 1120.2,932.3 1141.3,938.2 1162.5,937.6 1183.7,942.0 1204.8,946.4 1226.0,935.0 1247.1,913.9 1268.3,929.2 1289.5,936.5 1310.6,931.0 1331.8,925.0 1352.9,937.9 1374.1,934.1 1395.2,938.2 1416.4,938.3 1437.6,928.8 1458.7,917.5 1479.9,936.4 1501.0,946.0 1522.2,923.9 1543.4,930.7 1564.5,944.6 1585.7,933.1 1606.8,932.6 1628.0,947.2"/><polyline stroke="#fdb24c" points="697.0,772.2 718.2,956.0 739.3,787.9 760.5,947.5 781.6,931.4 802.8,948.0 824.0,944.2 845.1,951.4 866.3,945.9 887.4,954.1 908.6,953.3 929.8,942.3 950.9,945.8 972.1,939.9 993.2,801.3 1014.4,943.7 1035.5,933.6 1056.7,811.2 1077.9,941.0 1099.0,955.7 1120.2,947.8 1141.3,937.7 1162.5,948.0 1183.7,935.9 1204.8,943.7 1226.0,946.1 1247.1,955.0 1268.3,924.8 1289.5,942.7 1310.6,947.7 1331.8,956.2 1352.9,949.1 1374.1,921.3 1395.2,938.4 1416.4,949.3 1437.6,953.2 1458.7,943.4 1479.9,951.4 1501.0,953.0 1522.2,950.1 1543.4,955.0 1564.5,927.8 1585.7,951.2 1606.8,953.7 1628.0,947.6"/><polyline stroke="#ffe59a" points="697.0,940.2 718.2,952.6 739.3,953.1 760.5,940.6 781.6,953.6 802.8,948.2 824.0,931.8 845.1,917.2 866.3,940.3 887.4,833.0 908.6,955.7 929.8,923.7 950.9,946.4 972.1,940.0 993.2,955.2 1014.4,946.4 1035.5,955.1 1056.7,932.5 1077.9,951.8 1099.0,924.4 1120.2,918.9 1141.3,921.6 1162.5,866.8 1183.7,938.8 1204.8,936.5 1226.0,946.5 1247.1,949.3 1268.3,949.1 1289.5,956.4 1310.6,811.2 1331.8,942.7 1352.9,946.0 1374.1,947.7 1395.2,927.0 1416.4,887.6 1437.6,945.6 1458.7,954.7 1479.9,948.5 1501.0,955.6 1522.2,942.9 1543.4,955.7 1564.5,935.3 1585.7,942.6 1606.8,954.0 1628.0,952.6"/><polyline stroke="#f05a28" points="697.0,944.6 718.2,843.7 739.3,963.9 760.5,962.2 781.6,827.8 802.8,958.7 824.0,941.1 845.1,932.7 866.3,956.8 887.4,952.0 908.6,823.0 929.8,963.9 950.9,941.3 972.1,963.9 993.2,933.0 1014.4,945.7 1035.5,954.7 1056.7,963.0 1077.9,949.3 1099.0,963.9 1120.2,941.5 1141.3,935.4 1162.5,960.4 1183.7,954.5 1204.8,957.3 1226.0,957.6 1247.1,963.9 1268.3,945.8 1289.5,963.9 1310.6,877.8 1331.8,894.3 1352.9,944.3 1374.1,950.2 1395.2,930.9 1416.4,955.7 1437.6,958.7 1458.7,951.5 1479.9,963.9 1501.0,808.4 1522.2,962.4 1543.4,942.6 1564.5,963.9 1585.7,950.0 1606.8,963.9 1628.0,952.8"/><polyline stroke="#fdb24c" points="697.0,833.0 718.2,797.4 739.3,817.3 760.5,934.3 781.6,944.4 802.8,923.4 824.0,879.7 845.1,960.2 866.3,900.0 887.4,913.5 908.6,954.8 929.8,910.7 950.9,947.1 972.1,956.5 993.2,924.8 1014.4,945.6 1035.5,930.1 1056.7,910.5 1077.9,800.6 1099.0,955.9 1120.2,867.2 1141.3,931.7 1162.5,944.8 1183.7,930.0 1204.8,950.5 1226.0,806.5 1247.1,903.2 1268.3,949.2 1289.5,811.6 1310.6,944.1 1331.8,930.1 1352.9,927.7 1374.1,844.3 1395.2,821.8 1416.4,927.0 1437.6,919.1 1458.7,893.8 1479.9,844.0 1501.0,906.1 1522.2,916.7 1543.4,939.6 1564.5,820.1 1585.7,914.0 1606.8,936.7 1628.0,925.7"/><polyline stroke="#fec660" points="697.0,932.8 718.2,876.6 739.3,929.7 760.5,939.1 781.6,938.0 802.8,933.9 824.0,938.9 845.1,941.6 866.3,929.3 887.4,945.0 908.6,949.4 929.8,932.3 950.9,949.3 972.1,936.3 993.2,863.7 1014.4,944.5 1035.5,949.1 1056.7,942.5 1077.9,946.8 1099.0,933.3 1120.2,945.2 1141.3,938.3 1162.5,937.3 1183.7,933.0 1204.8,942.5 1226.0,946.7 1247.1,927.1 1268.3,944.7 1289.5,937.5 1310.6,830.6 1331.8,949.7 1352.9,924.4 1374.1,927.1 1395.2,942.9 1416.4,948.0 1437.6,947.7 1458.7,943.7 1479.9,930.9 1501.0,944.4 1522.2,946.9 1543.4,948.5 1564.5,933.5 1585.7,950.0 1606.8,945.9 1628.0,937.2"/><polyline stroke="#fb9139" points="697.0,936.1 718.2,951.7 739.3,914.8 760.5,948.5 781.6,882.4 802.8,956.1 824.0,917.2 845.1,953.2 866.3,845.6 887.4,931.8 908.6,930.7 929.8,796.3 950.9,917.7 972.1,957.3 993.2,941.3 1014.4,856.7 1035.5,952.8 1056.7,937.6 1077.9,870.5 1099.0,818.4 1120.2,859.2 1141.3,849.9 1162.5,891.1 1183.7,938.6 1204.8,842.7 1226.0,932.0 1247.1,902.1 1268.3,873.9 1289.5,960.2 1310.6,954.0 1331.8,935.0 1352.9,958.0 1374.1,950.7 1395.2,941.7 1416.4,955.0 1437.6,909.8 1458.7,937.0 1479.9,948.4 1501.0,962.6 1522.2,938.9 1543.4,872.9 1564.5,838.8 1585.7,919.8 1606.8,935.8 1628.0,957.3"/><polyline stroke="#7a0327" points="697.0,921.5 718.2,920.4 739.3,942.1 760.5,906.3 781.6,932.7 802.8,913.6 824.0,939.0 845.1,925.9 866.3,903.2 887.4,909.7 908.6,935.6 929.8,933.4 950.9,922.7 972.1,927.8 993.2,923.4 1014.4,927.9 1035.5,901.7 1056.7,914.3 1077.9,929.3 1099.0,919.9 1120.2,925.7 1141.3,933.4 1162.5,935.0 1183.7,939.9 1204.8,891.1 1226.0,924.2 1247.1,943.2 1268.3,909.2 1289.5,918.4 1310.6,920.6 1331.8,924.8 1352.9,915.1 1374.1,914.7 1395.2,940.5 1416.4,916.6 1437.6,921.3 1458.7,887.8 1479.9,924.3 1501.0,908.7 1522.2,922.3 1543.4,932.8 1564.5,938.5 1585.7,917.6 1606.8,934.1 1628.0,941.7"/><polyline stroke="#fec660" points="697.0,948.5 718.2,927.7 739.3,943.1 760.5,955.4 781.6,951.8 802.8,955.2 824.0,944.4 845.1,947.5 866.3,955.0 887.4,948.8 908.6,936.7 929.8,942.9 950.9,955.3 972.1,951.8 993.2,944.3 1014.4,944.7 1035.5,940.9 1056.7,943.2 1077.9,947.5 1099.0,949.6 1120.2,947.3 1141.3,927.8 1162.5,920.7 1183.7,942.1 1204.8,956.5 1226.0,946.4 1247.1,939.5 1268.3,945.6 1289.5,953.0 1310.6,954.0 1331.8,915.3 1352.9,939.5 1374.1,951.2 1395.2,952.7 1416.4,950.7 1437.6,799.7 1458.7,947.9 1479.9,942.4 1501.0,917.9 1522.2,761.3 1543.4,951.4 1564.5,955.2 1585.7,944.3 1606.8,945.0 1628.0,953.5"/><polyline stroke="#ffe59a" points="697.0,933.7 718.2,960.1 739.3,927.0 760.5,946.9 781.6,941.8 802.8,862.8 824.0,930.3 845.1,957.6 866.3,940.5 887.4,831.7 908.6,833.7 929.8,891.8 950.9,933.2 972.1,959.9 993.2,934.7 1014.4,937.0 1035.5,914.5 1056.7,797.9 1077.9,936.8 1099.0,922.8 1120.2,851.6 1141.3,840.4 1162.5,835.9 1183.7,925.6 1204.8,952.3 1226.0,884.4 1247.1,801.3 1268.3,933.1 1289.5,817.1 1310.6,950.0 1331.8,929.6 1352.9,815.3 1374.1,905.4 1395.2,814.5 1416.4,932.7 1437.6,948.4 1458.7,868.6 1479.9,895.2 1501.0,913.4 1522.2,813.5 1543.4,933.6 1564.5,902.2 1585.7,906.6 1606.8,841.6 1628.0,887.7"/><polyline stroke="#b00d26" points="697.0,881.2 718.2,930.6 739.3,869.9 760.5,862.1 781.6,810.6 802.8,909.5 824.0,897.6 845.1,884.7 866.3,790.6 887.4,925.5 908.6,846.2 929.8,925.9 950.9,829.4 972.1,920.0 993.2,898.8 1014.4,949.9 1035.5,830.5 1056.7,868.8 1077.9,903.0 1099.0,951.9 1120.2,913.8 1141.3,900.2 1162.5,895.0 1183.7,908.8 1204.8,917.7 1226.0,917.1 1247.1,935.1 1268.3,925.9 1289.5,947.2 1310.6,876.2 1331.8,913.4 1352.9,926.9 1374.1,869.3 1395.2,940.1 1416.4,818.3 1437.6,907.4 1458.7,870.1 1479.9,899.3 1501.0,946.9 1522.2,932.1 1543.4,880.3 1564.5,892.1 1585.7,795.6 1606.8,863.1 1628.0,888.6"/><polyline stroke="#95052a" points="697.0,948.3 718.2,944.4 739.3,891.2 760.5,915.2 781.6,933.7 802.8,948.6 824.0,926.5 845.1,880.1 866.3,939.0 887.4,941.1 908.6,933.8 929.8,942.9 950.9,935.7 972.1,914.9 993.2,925.7 1014.4,923.7 1035.5,946.7 1056.7,936.3 1077.9,919.5 1099.0,949.9 1120.2,950.4 1141.3,952.0 1162.5,951.4 1183.7,951.3 1204.8,951.4 1226.0,929.9 1247.1,917.3 1268.3,948.9 1289.5,863.1 1310.6,935.7 1331.8,899.3 1352.9,944.1 1374.1,933.4 1395.2,944.4 1416.4,858.6 1437.6,921.7 1458.7,941.3 1479.9,947.4 1501.0,922.9 1522.2,931.1 1543.4,888.1 1564.5,925.0 1585.7,947.1 1606.8,946.7 1628.0,951.4"/><polyline stroke="#fdb84e" points="703.3,950.2 724.5,956.0 745.7,884.1 766.8,676.8 788.0,872.2 809.1,956.9 830.3,953.8 851.5,956.1 872.6,959.9 893.8,942.3 914.9,958.2 936.1,934.2 957.3,951.9 978.4,955.1 999.6,938.8 1020.7,938.2 1041.9,964.7 1063.1,948.3 1084.2,943.1 1105.4,964.3 1126.5,965.0 1147.7,949.3 1168.8,952.9 1190.0,949.1 1211.2,962.3 1232.3,937.8 1253.5,949.3 1274.6,944.8 1295.8,937.2 1317.0,955.5 1338.1,937.2 1359.3,961.3 1380.4,965.9 1401.6,955.4 1422.8,945.5 1443.9,955.2 1465.1,957.0 1486.2,948.3 1507.4,940.9 1528.6,944.7 1549.7,960.7 1570.9,957.4 1592.0,942.4 1613.2,958.3 1628.0,957.8"/><path d="M705 971.5 H1634" stroke="#b5102a" stroke-width="3.5"/></g></svg><svg style="position:absolute;left:0;top:0" width="2780" height="1530" viewBox="0 0 2780 1530"><g fill="none" stroke-linecap="round"><path d="M1762.0 799.7 L2685.0 799.7" stroke="#d4eecd" stroke-width="3.0"/><path d="M1760.0 868.6 L2675.0 868.6" stroke="#bfe5bb" stroke-width="3.0"/><path d="M1760.0 875.0 L2682.0 875.0" stroke="#a9dcaa" stroke-width="3.0"/><path d="M1760.0 878.5 L2680.0 878.5" stroke="#c2e8c0" stroke-width="3.0"/><path d="M1760.0 881.3 L2680.0 881.3" stroke="#b3e0b7" stroke-width="3.0"/><path d="M1758.0 877.0 L1770.0 877.0" stroke="#5fb4cf" stroke-width="4.0"/><path d="M2608 882 L2626.5 925.5 L2669.7 920.7" stroke="#bfe6bd" stroke-width="2.5"/><path d="M2672.0 878.0 L2690.0 877.0" stroke="#3e8fc8" stroke-width="4.0"/><path d="M1758.0 822.0 L2680.0 807.0" stroke="#4ba6d2" stroke-width="3.2"/><path d="M1758.0 844.6 L2680.0 827.0" stroke="#1362ab" stroke-width="3.2"/><path d="M1758.0 860.0 L2680.0 849.7" stroke="#0b3f8a" stroke-width="3.6"/><path d="M1772.0 857.0 L2675.0 855.0" stroke="#0f4e98" stroke-width="3.0"/><path d="M1758.0 553.7 L2680.0 553.7" stroke="#0b3675" stroke-width="3.8"/></g></svg><svg style="position:absolute;left:591px;top:1075px" width="28" height="26" viewBox="0 0 28 26">
<defs><pattern id="hatch2" width="3" height="3" patternUnits="userSpaceOnUse" patternTransform="rotate(45)"><rect width="1.2" height="3" fill="#3a83cc"/></pattern></defs>
<rect x="1.5" y="1.5" width="25" height="23" rx="2" fill="none" stroke="#2a75c0" stroke-width="2"/>
<rect x="2.5" y="2.5" width="7" height="21" fill="url(#hatch2)"/>
<path d="M18 8 L13 13 L18 18" fill="none" stroke="#2a75c0" stroke-width="2"/></svg><div id="t65" class="t" style="left:629.2px;top:1076.5px;font-size:25.0px;line-height:25.0px;color:#2068b0;font-weight:normal;letter-spacing:-0.133px;">Hide Controls</div><div style="position:absolute;left:818.6px;top:1070.5px;width:1.5px;height:36.0px;background:#e0e0e2;"></div><div id="t66" class="t" style="left:847.4px;top:1076.8px;font-size:25.0px;line-height:25.0px;color:#232325;font-weight:normal;letter-spacing:-0.148px;">Showing <b>1–50</b> of <b>4K</b> matching containers, sorting may be delayed</div><div style="position:absolute;left:2290.7px;top:1064.5px;width:252.5px;height:48.5px;box-sizing:border-box;border:1.5px solid #dcdcdf;border-radius:5px;background:#fff;"></div><svg style="position:absolute;left:2312.0px;top:1076.0px" width="24" height="24" viewBox="0 0 24 24"><g fill="#707072"><rect x="10" y="0" width="4" height="6" rx="0.5" transform="rotate(0 12 12)"/><rect x="10" y="0" width="4" height="6" rx="0.5" transform="rotate(45 12 12)"/><rect x="10" y="0" width="4" height="6" rx="0.5" transform="rotate(90 12 12)"/><rect x="10" y="0" width="4" height="6" rx="0.5" transform="rotate(135 12 12)"/><rect x="10" y="0" width="4" height="6" rx="0.5" transform="rotate(180 12 12)"/><rect x="10" y="0" width="4" height="6" rx="0.5" transform="rotate(225 12 12)"/><rect x="10" y="0" width="4" height="6" rx="0.5" transform="rotate(270 12 12)"/><rect x="10" y="0" width="4" height="6" rx="0.5" transform="rotate(315 12 12)"/><circle cx="12" cy="12" r="8.5"/></g><circle cx="12" cy="12" r="3.6" fill="#fff"/></svg><div id="t67" class="t" style="left:2349.4px;top:1077.3px;font-size:25.5px;line-height:25.5px;color:#232325;font-weight:normal;letter-spacing:-0.357px;">Display Options</div><div style="position:absolute;left:2558.8px;top:1064.5px;width:193.7px;height:48.5px;box-sizing:border-box;border:1.5px solid #dcdcdf;border-radius:5px;background:#fff;"></div><svg style="position:absolute;left:2580.3px;top:1076.0px" width="24" height="24" viewBox="0 0 24 24"><g fill="#707072"><rect x="10" y="0" width="4" height="6" rx="0.5" transform="rotate(0 12 12)"/><rect x="10" y="0" width="4" height="6" rx="0.5" transform="rotate(45 12 12)"/><rect x="10" y="0" width="4" height="6" rx="0.5" transform="rotate(90 12 12)"/><rect x="10" y="0" width="4" height="6" rx="0.5" transform="rotate(135 12 12)"/><rect x="10" y="0" width="4" height="6" rx="0.5" transform="rotate(180 12 12)"/><rect x="10" y="0" width="4" height="6" rx="0.5" transform="rotate(225 12 12)"/><rect x="10" y="0" width="4" height="6" rx="0.5" transform="rotate(270 12 12)"/><rect x="10" y="0" width="4" height="6" rx="0.5" transform="rotate(315 12 12)"/><circle cx="12" cy="12" r="8.5"/></g><circle cx="12" cy="12" r="3.6" fill="#fff"/></svg><div id="t68" class="t" style="left:2618.0px;top:1077.3px;font-size:25.5px;line-height:25.5px;color:#232325;font-weight:normal;letter-spacing:-0.700px;">Customize</div><div style="position:absolute;left:572.0px;top:1128.8px;width:2180.6px;height:401.2px;box-sizing:border-box;border:1.5px solid #dcdcdf;border-bottom:none;border-radius:6px 6px 0 0;background:#fff;"></div><div id="t69" class="t" style="left:585.0px;top:1143.3px;font-size:22.0px;line-height:22.0px;color:#232325;font-weight:bold;letter-spacing:-0.067px;">NAME</div><div id="t70" class="t" style="right:1103.1px;top:1143.3px;font-size:22.0px;line-height:22.0px;color:#232325;font-weight:bold;letter-spacing:-1.050px;">CPU %</div><svg style="position:absolute;left:1821px;top:1144px" width="16" height="19" viewBox="0 0 16 19"><path d="M8 1 V17 M1.5 10.5 L8 17.5 L14.5 10.5" fill="none" stroke="#2a2a2c" stroke-width="2.2"/></svg><div id="t71" class="t" style="left:1850.0px;top:1143.3px;font-size:22.0px;line-height:22.0px;color:#232325;font-weight:bold;letter-spacing:-0.889px;">RSS MEMORY</div><div id="t72" class="t" style="right:621.4px;top:1143.3px;font-size:22.0px;line-height:22.0px;color:#232325;font-weight:bold;letter-spacing:-1.500px;">TX</div><div id="t73" class="t" style="right:454.8px;top:1143.3px;font-size:22.0px;line-height:22.0px;color:#232325;font-weight:bold;letter-spacing:-3.000px;">RX</div><div id="t74" class="t" style="left:2354.5px;top:1143.3px;font-size:22.0px;line-height:22.0px;color:#232325;font-weight:bold;letter-spacing:-1.260px;">STATUS</div><div id="t75" class="t" style="right:42.3px;top:1143.3px;font-size:22.0px;line-height:22.0px;color:#232325;font-weight:bold;letter-spacing:-0.883px;">STARTED (AGO)</div><div style="position:absolute;left:573.5px;top:1178.3px;width:2177.6px;height:1.5px;background:#e3e3e5;"></div><div style="position:absolute;left:573.5px;top:1250.3px;width:2177.6px;height:1.5px;background:#e3e3e5;"></div><div style="position:absolute;left:573.5px;top:1324.1px;width:2177.6px;height:1.5px;background:#e3e3e5;"></div><div style="position:absolute;left:573.5px;top:1396.3px;width:2177.6px;height:1.5px;background:#e3e3e5;"></div><div style="position:absolute;left:573.5px;top:1468.3px;width:2177.6px;height:1.5px;background:#e3e3e5;"></div><svg style="position:absolute;left:586.8px;top:1193.8px" width="36.5" height="36.5" viewBox="0 0 36.5 36.5"><polygon points="18.25,1.28 32.09,7.94 35.51,22.92 25.93,34.93 10.57,34.93 0.99,22.92 4.41,7.94" fill="#326ce5" stroke="#326ce5" stroke-width="2.56" stroke-linejoin="round"/><g stroke="#fff" fill="none"><circle cx="18.25" cy="18.25" r="8.94" stroke-width="2.37"/><path d="M18.25 15.70 L18.25 4.75 M20.25 16.66 L28.81 9.83 M20.74 18.82 L31.42 21.26 M19.36 20.55 L24.11 30.42 M17.14 20.55 L12.39 30.42 M15.76 18.82 L5.08 21.26 M16.25 16.66 L7.69 9.83 " stroke-width="2.01" stroke-linecap="round"/></g><circle cx="18.25" cy="18.25" r="2.19" fill="#326ce5" stroke="#fff" stroke-width="1.46"/></svg><div id="t76" class="t" style="left:639.2px;top:1204.9px;font-size:24.5px;line-height:24.5px;color:#232325;font-weight:normal;letter-spacing:0.404px;">product-recommendation-db_product-recommendation-db-1</div><div id="t77" class="t" style="right:1233.6px;top:1199.7px;font-size:23.5px;line-height:23.5px;color:#232325;font-weight:bold;letter-spacing:-0.200px;">15%</div><div style="position:absolute;left:1562.0px;top:1192.0px;width:115.8px;height:36.0px;background:#e6e6e8;"></div><div style="position:absolute;left:1562.0px;top:1192.0px;width:18.0px;height:36.0px;background:#3b91ea;"></div><div style="position:absolute;left:1565.9px;top:1210.1px;width:36.4px;height:1.8px;background:#2a5fb0;"></div><div style="position:absolute;left:1564.9px;top:1200.0px;width:2.0px;height:22.0px;background:#1f5bb0;"></div><div style="position:absolute;left:1601.3px;top:1200.0px;width:2.0px;height:22.0px;background:#4a79c4;"></div><div id="t78" class="t" style="right:921.6px;top:1199.7px;font-size:23.5px;line-height:23.5px;color:#232325;font-weight:bold;letter-spacing:-1.000px;">9 GB</div><div style="position:absolute;left:1874.0px;top:1192.0px;width:118.2px;height:36.0px;background:#e6e6e8;"></div><div style="position:absolute;left:1874.0px;top:1192.0px;width:59.8px;height:36.0px;background:#3b91ea;"></div><div style="position:absolute;left:1930.8px;top:1200.0px;width:2.5px;height:22.0px;background:#1857a8;"></div><div id="t79" class="t" style="right:621.3px;top:1203.8px;font-size:18.5px;line-height:18.5px;color:#707072;font-weight:bold;letter-spacing:-1.000px;">KB</div><div id="t80" class="t" style="right:651.2px;top:1199.7px;font-size:23.5px;line-height:23.5px;color:#232325;font-weight:bold;letter-spacing:0.067px;">9.23</div><div id="t81" class="t" style="right:452.1px;top:1203.8px;font-size:18.5px;line-height:18.5px;color:#707072;font-weight:bold;letter-spacing:-0.500px;">B</div><div id="t82" class="t" style="right:469.9px;top:1199.7px;font-size:23.5px;line-height:23.5px;color:#232325;font-weight:bold;letter-spacing:0.000px;">0</div><div style="position:absolute;left:2354.0px;top:1191.8px;width:47.6px;height:35.6px;background:#3ec15f;border-radius:6px;"></div><div id="t83" class="t" style="left:2364.0px;top:1200.9px;font-size:19.5px;line-height:19.5px;color:#ffffff;font-weight:bold;letter-spacing:0.500px;">UP</div><div id="t84" class="t" style="right:41.5px;top:1197.9px;font-size:24.0px;line-height:24.0px;color:#232325;font-weight:normal;letter-spacing:-0.040px;">3 days</div><svg style="position:absolute;left:586.8px;top:1265.8px" width="36.5" height="36.5" viewBox="0 0 36.5 36.5"><polygon points="18.25,1.28 32.09,7.94 35.51,22.92 25.93,34.93 10.57,34.93 0.99,22.92 4.41,7.94" fill="#326ce5" stroke="#326ce5" stroke-width="2.56" stroke-linejoin="round"/><g stroke="#fff" fill="none"><circle cx="18.25" cy="18.25" r="8.94" stroke-width="2.37"/><path d="M18.25 15.70 L18.25 4.75 M20.25 16.66 L28.81 9.83 M20.74 18.82 L31.42 21.26 M19.36 20.55 L24.11 30.42 M17.14 20.55 L12.39 30.42 M15.76 18.82 L5.08 21.26 M16.25 16.66 L7.69 9.83 " stroke-width="2.01" stroke-linecap="round"/></g><circle cx="18.25" cy="18.25" r="2.19" fill="#326ce5" stroke="#fff" stroke-width="1.46"/></svg><div id="t85" class="t" style="left:639.2px;top:1276.9px;font-size:24.5px;line-height:24.5px;color:#232325;font-weight:normal;letter-spacing:0.404px;">product-recommendation-db_product-recommendation-db-1</div><div id="t86" class="t" style="right:1231.9px;top:1271.7px;font-size:23.5px;line-height:23.5px;color:#232325;font-weight:bold;letter-spacing:0.800px;">11%</div><div style="position:absolute;left:1562.0px;top:1264.0px;width:115.8px;height:36.0px;background:#e6e6e8;"></div><div style="position:absolute;left:1562.0px;top:1264.0px;width:13.6px;height:36.0px;background:#3b91ea;"></div><div style="position:absolute;left:1564.5px;top:1282.1px;width:23.5px;height:1.8px;background:#2a5fb0;"></div><div style="position:absolute;left:1563.5px;top:1272.0px;width:2.0px;height:22.0px;background:#1f5bb0;"></div><div style="position:absolute;left:1587.0px;top:1272.0px;width:2.0px;height:22.0px;background:#4a79c4;"></div><div id="t87" class="t" style="right:921.6px;top:1271.7px;font-size:23.5px;line-height:23.5px;color:#232325;font-weight:bold;letter-spacing:-1.000px;">9 GB</div><div style="position:absolute;left:1874.0px;top:1264.0px;width:118.2px;height:36.0px;background:#e6e6e8;"></div><div style="position:absolute;left:1874.0px;top:1264.0px;width:59.8px;height:36.0px;background:#3b91ea;"></div><div style="position:absolute;left:1930.8px;top:1272.0px;width:2.5px;height:22.0px;background:#1857a8;"></div><div id="t88" class="t" style="right:621.3px;top:1275.8px;font-size:18.5px;line-height:18.5px;color:#707072;font-weight:bold;letter-spacing:-1.000px;">KB</div><div id="t89" class="t" style="right:652.8px;top:1271.7px;font-size:23.5px;line-height:23.5px;color:#232325;font-weight:bold;letter-spacing:-0.533px;">14.4</div><div id="t90" class="t" style="right:452.1px;top:1275.8px;font-size:18.5px;line-height:18.5px;color:#707072;font-weight:bold;letter-spacing:-0.500px;">B</div><div id="t91" class="t" style="right:469.9px;top:1271.7px;font-size:23.5px;line-height:23.5px;color:#232325;font-weight:bold;letter-spacing:0.000px;">0</div><div style="position:absolute;left:2354.0px;top:1263.8px;width:89.6px;height:35.6px;background:#979799;border-radius:6px;"></div><div id="t92" class="t" style="left:2364.0px;top:1272.9px;font-size:19.5px;line-height:19.5px;color:#ffffff;font-weight:bold;letter-spacing:-0.200px;">EXITED</div><div id="t93" class="t" style="right:41.4px;top:1269.9px;font-size:24.0px;line-height:24.0px;color:#232325;font-weight:normal;letter-spacing:0.400px;">13 hours</div><svg style="position:absolute;left:586.8px;top:1339.5px" width="36.5" height="36.5" viewBox="0 0 36.5 36.5"><polygon points="18.25,1.28 32.09,7.94 35.51,22.92 25.93,34.93 10.57,34.93 0.99,22.92 4.41,7.94" fill="#326ce5" stroke="#326ce5" stroke-width="2.56" stroke-linejoin="round"/><g stroke="#fff" fill="none"><circle cx="18.25" cy="18.25" r="8.94" stroke-width="2.37"/><path d="M18.25 15.70 L18.25 4.75 M20.25 16.66 L28.81 9.83 M20.74 18.82 L31.42 21.26 M19.36 20.55 L24.11 30.42 M17.14 20.55 L12.39 30.42 M15.76 18.82 L5.08 21.26 M16.25 16.66 L7.69 9.83 " stroke-width="2.01" stroke-linecap="round"/></g><circle cx="18.25" cy="18.25" r="2.19" fill="#326ce5" stroke="#fff" stroke-width="1.46"/></svg><div id="t94" class="t" style="left:639.2px;top:1350.7px;font-size:24.5px;line-height:24.5px;color:#232325;font-weight:normal;letter-spacing:0.423px;">product-recommendation-db_product-recommendation-db-0</div><div id="t95" class="t" style="right:1233.8px;top:1345.5px;font-size:23.5px;line-height:23.5px;color:#232325;font-weight:bold;letter-spacing:-0.400px;">3%</div><div style="position:absolute;left:1562.0px;top:1337.8px;width:115.8px;height:36.0px;background:#e6e6e8;"></div><div style="position:absolute;left:1562.0px;top:1337.8px;width:3.0px;height:36.0px;background:#3b91ea;"></div><div style="position:absolute;left:1563.5px;top:1355.9px;width:5.5px;height:1.8px;background:#2a5fb0;"></div><div style="position:absolute;left:1562.5px;top:1345.8px;width:2.0px;height:22.0px;background:#1f5bb0;"></div><div style="position:absolute;left:1568.0px;top:1345.8px;width:2.0px;height:22.0px;background:#4a79c4;"></div><div id="t96" class="t" style="right:921.6px;top:1345.5px;font-size:23.5px;line-height:23.5px;color:#232325;font-weight:bold;letter-spacing:-1.000px;">9 GB</div><div style="position:absolute;left:1874.0px;top:1337.8px;width:118.2px;height:36.0px;background:#e6e6e8;"></div><div style="position:absolute;left:1874.0px;top:1337.8px;width:59.8px;height:36.0px;background:#3b91ea;"></div><div style="position:absolute;left:1930.8px;top:1345.8px;width:2.5px;height:22.0px;background:#1857a8;"></div><div id="t97" class="t" style="right:621.1px;top:1349.6px;font-size:18.5px;line-height:18.5px;color:#707072;font-weight:bold;letter-spacing:-0.500px;">B</div><div id="t98" class="t" style="right:639.2px;top:1345.5px;font-size:23.5px;line-height:23.5px;color:#232325;font-weight:bold;letter-spacing:-0.450px;">437</div><div id="t99" class="t" style="right:452.1px;top:1349.6px;font-size:18.5px;line-height:18.5px;color:#707072;font-weight:bold;letter-spacing:-0.500px;">B</div><div id="t100" class="t" style="right:469.9px;top:1345.5px;font-size:23.5px;line-height:23.5px;color:#232325;font-weight:bold;letter-spacing:0.000px;">0</div><div style="position:absolute;left:2354.0px;top:1337.6px;width:47.6px;height:35.6px;background:#3ec15f;border-radius:6px;"></div><div id="t101" class="t" style="left:2364.0px;top:1346.7px;font-size:19.5px;line-height:19.5px;color:#ffffff;font-weight:bold;letter-spacing:0.500px;">UP</div><div id="t102" class="t" style="right:41.4px;top:1343.7px;font-size:24.0px;line-height:24.0px;color:#232325;font-weight:normal;letter-spacing:0.400px;">12 hours</div><svg style="position:absolute;left:586.8px;top:1411.8px" width="36.5" height="36.5" viewBox="0 0 36.5 36.5"><polygon points="18.25,1.28 32.09,7.94 35.51,22.92 25.93,34.93 10.57,34.93 0.99,22.92 4.41,7.94" fill="#326ce5" stroke="#326ce5" stroke-width="2.56" stroke-linejoin="round"/><g stroke="#fff" fill="none"><circle cx="18.25" cy="18.25" r="8.94" stroke-width="2.37"/><path d="M18.25 15.70 L18.25 4.75 M20.25 16.66 L28.81 9.83 M20.74 18.82 L31.42 21.26 M19.36 20.55 L24.11 30.42 M17.14 20.55 L12.39 30.42 M15.76 18.82 L5.08 21.26 M16.25 16.66 L7.69 9.83 " stroke-width="2.01" stroke-linecap="round"/></g><circle cx="18.25" cy="18.25" r="2.19" fill="#326ce5" stroke="#fff" stroke-width="1.46"/></svg><div id="t103" class="t" style="left:639.2px;top:1422.9px;font-size:24.5px;line-height:24.5px;color:#232325;font-weight:normal;letter-spacing:0.423px;">product-recommendation-db_product-recommendation-db-0</div><div id="t104" class="t" style="right:1233.8px;top:1417.7px;font-size:23.5px;line-height:23.5px;color:#232325;font-weight:bold;letter-spacing:-0.400px;">1%</div><div style="position:absolute;left:1562.0px;top:1410.0px;width:115.8px;height:36.0px;background:#e6e6e8;"></div><div style="position:absolute;left:1562.0px;top:1410.0px;width:1.5px;height:36.0px;background:#3b91ea;"></div><div style="position:absolute;left:1563.0px;top:1428.1px;width:2.5px;height:1.8px;background:#2a5fb0;"></div><div style="position:absolute;left:1562.0px;top:1418.0px;width:2.0px;height:22.0px;background:#1f5bb0;"></div><div style="position:absolute;left:1564.5px;top:1418.0px;width:2.0px;height:22.0px;background:#4a79c4;"></div><div id="t105" class="t" style="right:921.6px;top:1417.7px;font-size:23.5px;line-height:23.5px;color:#232325;font-weight:bold;letter-spacing:-1.000px;">9 GB</div><div style="position:absolute;left:1874.0px;top:1410.0px;width:118.2px;height:36.0px;background:#e6e6e8;"></div><div style="position:absolute;left:1874.0px;top:1410.0px;width:59.8px;height:36.0px;background:#3b91ea;"></div><div style="position:absolute;left:1930.8px;top:1418.0px;width:2.5px;height:22.0px;background:#1857a8;"></div><div id="t106" class="t" style="right:621.1px;top:1421.8px;font-size:18.5px;line-height:18.5px;color:#707072;font-weight:bold;letter-spacing:-0.500px;">B</div><div id="t107" class="t" style="right:639.4px;top:1417.7px;font-size:23.5px;line-height:23.5px;color:#232325;font-weight:bold;letter-spacing:-0.133px;">93.4</div><div id="t108" class="t" style="right:452.1px;top:1421.8px;font-size:18.5px;line-height:18.5px;color:#707072;font-weight:bold;letter-spacing:-0.500px;">B</div><div id="t109" class="t" style="right:469.9px;top:1417.7px;font-size:23.5px;line-height:23.5px;color:#232325;font-weight:bold;letter-spacing:0.000px;">0</div><div style="position:absolute;left:2354.0px;top:1409.8px;width:47.6px;height:35.6px;background:#3ec15f;border-radius:6px;"></div><div id="t110" class="t" style="left:2364.0px;top:1418.9px;font-size:19.5px;line-height:19.5px;color:#ffffff;font-weight:bold;letter-spacing:0.500px;">UP</div><div id="t111" class="t" style="right:41.7px;top:1415.9px;font-size:24.0px;line-height:24.0px;color:#232325;font-weight:normal;letter-spacing:0.417px;">8 hours</div><svg style="position:absolute;left:586.8px;top:1483.8px" width="36.5" height="36.5" viewBox="0 0 36.5 36.5"><polygon points="18.25,1.28 32.09,7.94 35.51,22.92 25.93,34.93 10.57,34.93 0.99,22.92 4.41,7.94" fill="#326ce5" stroke="#326ce5" stroke-width="2.56" stroke-linejoin="round"/><g stroke="#fff" fill="none"><circle cx="18.25" cy="18.25" r="8.94" stroke-width="2.37"/><path d="M18.25 15.70 L18.25 4.75 M20.25 16.66 L28.81 9.83 M20.74 18.82 L31.42 21.26 M19.36 20.55 L24.11 30.42 M17.14 20.55 L12.39 30.42 M15.76 18.82 L5.08 21.26 M16.25 16.66 L7.69 9.83 " stroke-width="2.01" stroke-linecap="round"/></g><circle cx="18.25" cy="18.25" r="2.19" fill="#326ce5" stroke="#fff" stroke-width="1.46"/></svg><div id="t112" class="t" style="left:639.2px;top:1494.9px;font-size:24.5px;line-height:24.5px;color:#232325;font-weight:normal;letter-spacing:0.404px;">product-recommendation-db_product-recommendation-db-1</div><div id="t113" class="t" style="right:1234.1px;top:1489.7px;font-size:23.5px;line-height:23.5px;color:#232325;font-weight:bold;letter-spacing:-0.700px;">25%</div><div style="position:absolute;left:1562.0px;top:1482.0px;width:115.8px;height:36.0px;background:#e6e6e8;"></div><div style="position:absolute;left:1562.0px;top:1482.0px;width:29.4px;height:36.0px;background:#3b91ea;"></div><div style="position:absolute;left:1567.5px;top:1500.1px;width:47.5px;height:1.8px;background:#2a5fb0;"></div><div style="position:absolute;left:1566.5px;top:1490.0px;width:2.0px;height:22.0px;background:#1f5bb0;"></div><div style="position:absolute;left:1614.0px;top:1490.0px;width:2.0px;height:22.0px;background:#4a79c4;"></div><div id="t114" class="t" style="right:922.0px;top:1489.7px;font-size:23.5px;line-height:23.5px;color:#232325;font-weight:bold;letter-spacing:-1.333px;">4 GB</div><div style="position:absolute;left:1874.0px;top:1482.0px;width:118.2px;height:36.0px;background:#e6e6e8;"></div><div style="position:absolute;left:1874.0px;top:1482.0px;width:100.0px;height:36.0px;background:#3b91ea;"></div><div style="position:absolute;left:1971.0px;top:1490.0px;width:2.5px;height:22.0px;background:#1857a8;"></div><div id="t115" class="t" style="right:621.3px;top:1493.8px;font-size:18.5px;line-height:18.5px;color:#707072;font-weight:bold;letter-spacing:-1.000px;">KB</div><div id="t116" class="t" style="right:652.5px;top:1489.7px;font-size:23.5px;line-height:23.5px;color:#232325;font-weight:bold;letter-spacing:-0.267px;">9.45</div><div id="t117" class="t" style="right:452.1px;top:1493.8px;font-size:18.5px;line-height:18.5px;color:#707072;font-weight:bold;letter-spacing:-0.500px;">B</div><div id="t118" class="t" style="right:469.9px;top:1489.7px;font-size:23.5px;line-height:23.5px;color:#232325;font-weight:bold;letter-spacing:0.000px;">0</div><div style="position:absolute;left:2354.0px;top:1481.8px;width:89.6px;height:35.6px;background:#979799;border-radius:6px;"></div><div id="t119" class="t" style="left:2364.0px;top:1490.9px;font-size:19.5px;line-height:19.5px;color:#ffffff;font-weight:bold;letter-spacing:-0.200px;">EXITED</div><div id="t120" class="t" style="right:41.4px;top:1487.9px;font-size:24.0px;line-height:24.0px;color:#232325;font-weight:normal;letter-spacing:0.400px;">19 hours</div><div style="position:absolute;left:2758px;top:1508px;width:22px;height:22px;background:radial-gradient(circle at 0 0, rgba(0,0,0,0) 21px, #2d2945 22px);"></div></div>
<script>(function(){var w=window.innerWidth;if(w&&Math.abs(w-2780)>2){document.documentElement.style.zoom=(w/2780);}})();</script>
</body></html>
